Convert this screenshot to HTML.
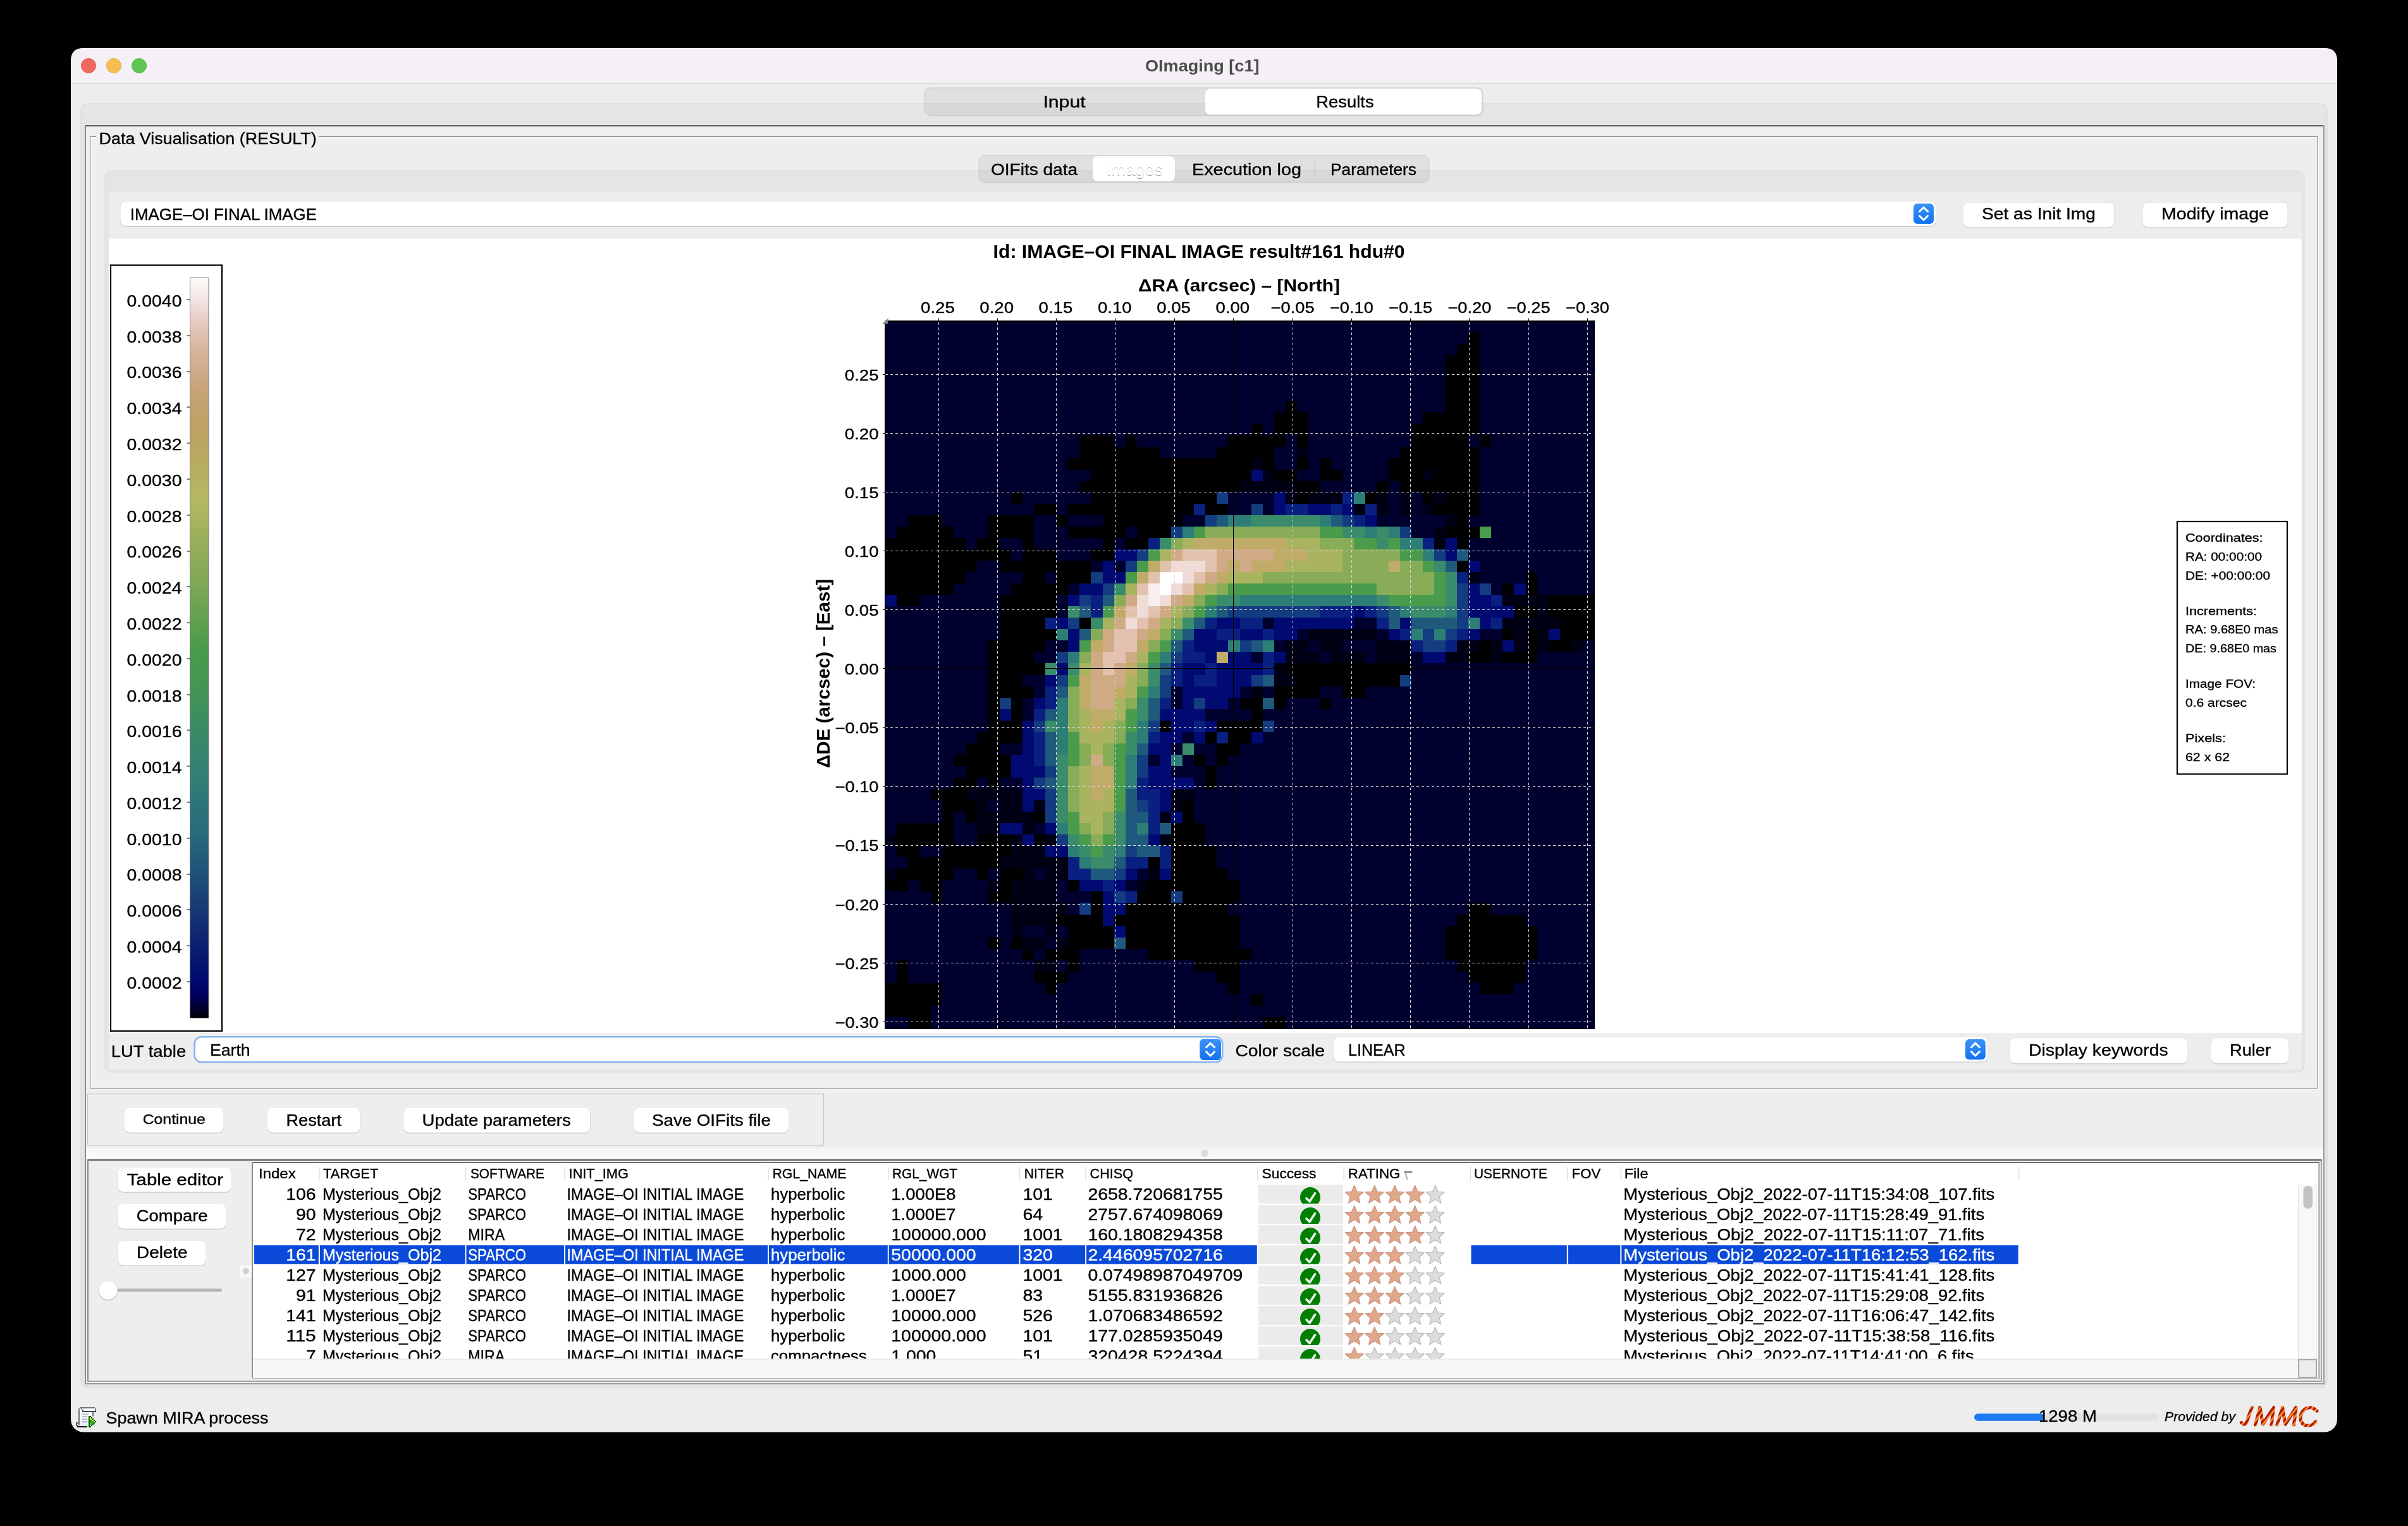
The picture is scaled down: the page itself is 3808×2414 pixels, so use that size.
<!DOCTYPE html>
<html><head><meta charset="utf-8"><title>OImaging</title>
<style>html,body{margin:0;padding:0;background:#000;overflow:hidden}svg{display:block;will-change:transform}text{font-family:"Liberation Sans",sans-serif;white-space:pre}</style>
</head><body>
<svg width="3808" height="2414" viewBox="0 0 3808 2414">
<defs><linearGradient id="bg" x1="0" y1="0" x2="0" y2="1"><stop offset="0" stop-color="#3b93f8"/><stop offset="1" stop-color="#1272ee"/></linearGradient><linearGradient id="cbar" x1="0" y1="1" x2="0" y2="0"><stop offset="0" stop-color="#000008"/><stop offset="0.03" stop-color="#00005c"/><stop offset="0.05" stop-color="#000a6e"/><stop offset="0.10" stop-color="#0c2070"/><stop offset="0.15" stop-color="#183a74"/><stop offset="0.20" stop-color="#1f5478"/><stop offset="0.25" stop-color="#286a7a"/><stop offset="0.30" stop-color="#2e7878"/><stop offset="0.35" stop-color="#368470"/><stop offset="0.40" stop-color="#3c8c62"/><stop offset="0.45" stop-color="#439652"/><stop offset="0.50" stop-color="#4a9a4a"/><stop offset="0.55" stop-color="#6aa252"/><stop offset="0.60" stop-color="#86aa58"/><stop offset="0.65" stop-color="#9cb05c"/><stop offset="0.70" stop-color="#b4b862"/><stop offset="0.75" stop-color="#b8ac62"/><stop offset="0.80" stop-color="#bea064"/><stop offset="0.85" stop-color="#c8a478"/><stop offset="0.90" stop-color="#d6b49c"/><stop offset="0.94" stop-color="#e6cac0"/><stop offset="0.97" stop-color="#f2e4e2"/><stop offset="1" stop-color="#fdfbfb"/></linearGradient><linearGradient id="jm" x1="0" y1="0" x2="1" y2="1"><stop offset="0" stop-color="#8a1000"/><stop offset="0.5" stop-color="#e85a10"/><stop offset="1" stop-color="#a01800"/></linearGradient></defs>
<rect x="0" y="0" width="3808" height="2414" fill="#000"/>
<rect x="112" y="76" width="3584" height="2189.5" fill="#ededed" rx="20"/>
<path d="M112 132 V96 Q112 76 132 76 H3676 Q3696 76 3696 96 V132 Z" fill="#f5f0f6"/>
<rect x="112" y="132" width="3584" height="1" fill="#d3d0d4"/>
<circle cx="140" cy="104" r="11.6" fill="#ee6a5f" stroke="#d9574c" stroke-width="0.8"/>
<circle cx="180" cy="104" r="11.6" fill="#f5bf4f" stroke="#dba73c" stroke-width="0.8"/>
<circle cx="220" cy="104" r="11.6" fill="#61c554" stroke="#4fae43" stroke-width="0.8"/>
<text x="1811.0" y="113.0" font-size="26" font-weight="700" fill="#4b4b4b" textLength="180.5" lengthAdjust="spacingAndGlyphs">OImaging [c1]</text>
<rect x="128" y="164" width="3552" height="2031" fill="#e5e5e5" rx="10" stroke="#d6d6d6" stroke-width="1"/>
<rect x="1462" y="139" width="883" height="43.5" fill="#000000" rx="9" stroke="#c4c4c4" stroke-width="1" fill-opacity="0.055" stroke-opacity="0.8"/>
<rect x="1906" y="141" width="437" height="42" fill="#c6c6c6" rx="8"/>
<rect x="1906" y="140.5" width="437" height="41.0" fill="#ffffff" rx="8"/>
<text x="1649.4" y="170.0" font-size="26" fill="#000" stroke="#000" stroke-width="0.35" textLength="67.2" lengthAdjust="spacingAndGlyphs">Input</text>
<text x="2081.3" y="170.0" font-size="26" fill="#000" stroke="#000" stroke-width="0.35" textLength="91.3" lengthAdjust="spacingAndGlyphs">Results</text>
<rect x="134" y="198" width="3542" height="1992" fill="#eeeeee"/>
<rect x="134" y="198" width="3542" height="2" fill="#5c5c5c"/>
<rect x="134" y="198" width="2" height="1992" fill="#8c8c8c"/>
<rect x="3674" y="198" width="2" height="1992" fill="#9a9a9a"/>
<rect x="134" y="2188" width="3542" height="2" fill="#9a9a9a"/>
<rect x="142" y="215" width="3523" height="2" fill="#9c9c9c"/>
<rect x="143.5" y="217" width="3521" height="1.5" fill="#ffffff"/>
<rect x="142" y="215" width="1.5" height="1507" fill="#9a9a9a"/>
<rect x="143.5" y="216.5" width="1" height="1505" fill="#ffffff"/>
<rect x="3664" y="215" width="1.5" height="1507" fill="#9a9a9a"/>
<rect x="3665.5" y="215" width="1" height="1509" fill="#ffffff"/>
<rect x="142" y="1721" width="3523" height="1.5" fill="#9a9a9a"/>
<rect x="142" y="1722.5" width="3524" height="1" fill="#ffffff"/>
<rect x="152" y="205" width="352" height="20" fill="#eeeeee"/>
<text x="156.6" y="227.6" font-size="26" fill="#000" stroke="#000" stroke-width="0.35" textLength="344.1" lengthAdjust="spacingAndGlyphs">Data Visualisation (RESULT)</text>
<rect x="166" y="270" width="3478" height="1426" fill="#e5e5e5" rx="10" stroke="#dadada" stroke-width="1"/>
<rect x="1548" y="245.6" width="712" height="42.8" fill="#000000" rx="9" stroke="#c4c4c4" stroke-width="1" fill-opacity="0.055" stroke-opacity="0.8"/>
<rect x="1728" y="247.5" width="130" height="40.5" fill="#c6c6c6" rx="8"/>
<rect x="1728" y="247" width="130" height="40" fill="#ffffff" rx="8"/>
<rect x="2078.5" y="258" width="1" height="20" fill="#c4c4c4"/>
<text x="1567.0" y="276.8" font-size="26" fill="#000" stroke="#000" stroke-width="0.35" textLength="137.0" lengthAdjust="spacingAndGlyphs">OIFits data</text>
<text x="1750.0" y="278.0" font-size="26" fill="#8e8e8e" textLength="89.0" lengthAdjust="spacingAndGlyphs">Images</text>
<text x="1750.0" y="276.6" font-size="26" fill="#ffffff" stroke="#ffffff" stroke-width="0.35" textLength="89.0" lengthAdjust="spacingAndGlyphs">Images</text>
<text x="1885.0" y="276.8" font-size="26" fill="#000" stroke="#000" stroke-width="0.35" textLength="173.0" lengthAdjust="spacingAndGlyphs">Execution log</text>
<text x="2104.0" y="276.8" font-size="26" fill="#000" stroke="#000" stroke-width="0.35" textLength="136.0" lengthAdjust="spacingAndGlyphs">Parameters</text>
<rect x="172" y="304" width="3468" height="1388" fill="#ededed"/>
<rect x="172" y="377.6" width="3467.5" height="1256.6" fill="#ffffff"/>
<rect x="190" y="318.5" width="2871.7" height="40.5" fill="#c8c8c8" rx="9"/>
<rect x="190" y="318" width="2871.7" height="40" fill="#dadada" rx="9"/>
<rect x="190.5" y="318.5" width="2870.7" height="39.0" fill="#ffffff" rx="8.5"/>
<rect x="3026" y="322" width="32" height="32" fill="url(#bg)" rx="6"/>
<path d="M3035.5 334.5 L3042.0 328.0 L3048.5 334.5 M3035.5 341.5 L3042.0 348.0 L3048.5 341.5" fill="none" stroke="#fff" stroke-width="3" stroke-linecap="round" stroke-linejoin="round"/>
<text x="205.8" y="348.4" font-size="26" fill="#000" stroke="#000" stroke-width="0.35" textLength="295.2" lengthAdjust="spacingAndGlyphs">IMAGE–OI FINAL IMAGE</text>
<rect x="3104" y="320.5" width="239.7" height="40.5" fill="#c9c9c9" rx="9"/>
<rect x="3104" y="320" width="239.7" height="40" fill="#d9d9d9" rx="9"/>
<rect x="3104.5" y="320.5" width="238.7" height="39.0" fill="#ffffff" rx="8.5"/>
<text x="3134.0" y="347.3" font-size="26" fill="#000" stroke="#000" stroke-width="0.35" textLength="180.0" lengthAdjust="spacingAndGlyphs">Set as Init Img</text>
<rect x="3388" y="320.5" width="230" height="40.5" fill="#c9c9c9" rx="9"/>
<rect x="3388" y="320" width="230" height="40" fill="#d9d9d9" rx="9"/>
<rect x="3388.5" y="320.5" width="229.0" height="39.0" fill="#ffffff" rx="8.5"/>
<text x="3418.0" y="347.3" font-size="26" fill="#000" stroke="#000" stroke-width="0.35" textLength="170.0" lengthAdjust="spacingAndGlyphs">Modify image</text>
<text x="1570.6" y="407.8" font-size="30" font-weight="700" fill="#000" textLength="651.0" lengthAdjust="spacingAndGlyphs">Id: IMAGE–OI FINAL IMAGE result#161 hdu#0</text>
<text x="1800.0" y="460.7" font-size="28" font-weight="700" fill="#000" textLength="319.0" lengthAdjust="spacingAndGlyphs">ΔRA (arcsec) – [North]</text>
<g transform="translate(1311.5 1213.9) rotate(-90)">
<text x="-1.0" y="0.0" font-size="30" font-weight="700" fill="#000" textLength="299.0" lengthAdjust="spacingAndGlyphs">ΔDE (arcsec) – [East]</text>
</g>
<svg x="1400" y="508" width="1121" height="1119" viewBox="0 0 62 62" preserveAspectRatio="none" shape-rendering="crispEdges"><rect width="62" height="62" fill="#00002e"/><path fill="#000000" d="M51 1h1v1h-1zM50 2h2v1h-2zM49 3h3v1h-3zM49 4h3v1h-3zM49 5h3v1h-3zM49 6h3v1h-3zM35 7h1v1h-1zM49 7h3v1h-3zM34 8h3v1h-3zM47 8h5v1h-5zM32 9h1v1h-1zM34 9h3v1h-3zM46 9h6v1h-6zM17 10h3v1h-3zM21 10h1v1h-1zM30 10h5v1h-5zM36 10h1v1h-1zM46 10h5v1h-5zM52 10h1v1h-1zM17 11h7v1h-7zM29 11h5v1h-5zM45 11h7v1h-7zM16 12h16v1h-16zM33 12h1v1h-1zM36 12h1v1h-1zM38 12h1v1h-1zM44 12h8v1h-8zM18 13h14v1h-14zM34 13h2v1h-2zM38 13h2v1h-2zM44 13h3v1h-3zM48 13h4v1h-4zM17 14h14v1h-14zM36 14h2v1h-2zM43 14h1v1h-1zM45 14h7v1h-7zM11 15h1v1h-1zM18 15h11v1h-11zM36 15h1v1h-1zM42 15h1v1h-1zM47 15h1v1h-1zM49 15h3v1h-3zM13 16h2v1h-2zM16 16h11v1h-11zM28 16h2v1h-2zM48 16h4v1h-4zM2 17h3v1h-3zM9 17h4v1h-4zM15 17h1v1h-1zM19 17h7v1h-7zM50 17h1v1h-1zM1 18h5v1h-5zM9 18h4v1h-4zM16 18h5v1h-5zM22 18h3v1h-3zM49 18h3v1h-3zM0 19h7v1h-7zM8 19h2v1h-2zM12 19h1v1h-1zM19 19h1v1h-1zM21 19h2v1h-2zM50 19h1v1h-1zM0 20h11v1h-11zM12 20h3v1h-3zM18 20h2v1h-2zM0 21h8v1h-8zM10 21h8v1h-8zM50 21h1v1h-1zM0 22h7v1h-7zM12 22h2v1h-2zM15 22h3v1h-3zM56 22h1v1h-1zM0 23h6v1h-6zM11 23h5v1h-5zM54 23h1v1h-1zM56 23h1v1h-1zM1 24h2v1h-2zM10 24h5v1h-5zM58 24h4v1h-4zM10 25h5v1h-5zM55 25h2v1h-2zM58 25h4v1h-4zM10 26h4v1h-4zM17 26h1v1h-1zM59 26h3v1h-3zM10 27h5v1h-5zM54 27h1v1h-1zM56 27h1v1h-1zM59 27h3v1h-3zM9 28h5v1h-5zM52 28h1v1h-1zM56 28h1v1h-1zM58 28h2v1h-2zM9 29h4v1h-4zM51 29h2v1h-2zM54 29h3v1h-3zM9 30h5v1h-5zM35 30h11v1h-11zM9 31h3v1h-3zM36 31h9v1h-9zM9 32h4v1h-4zM34 32h4v1h-4zM40 32h2v1h-2zM9 33h1v1h-1zM11 33h1v1h-1zM31 33h2v1h-2zM34 33h1v1h-1zM38 33h1v1h-1zM9 34h1v1h-1zM11 34h1v1h-1zM32 34h1v1h-1zM9 35h3v1h-3zM24 35h1v1h-1zM29 35h4v1h-4zM8 36h4v1h-4zM28 36h1v1h-1zM30 36h2v1h-2zM7 37h3v1h-3zM29 37h2v1h-2zM6 38h5v1h-5zM27 38h1v1h-1zM29 38h1v1h-1zM7 39h4v1h-4zM28 39h1v1h-1zM6 40h2v1h-2zM9 40h1v1h-1zM28 40h1v1h-1zM4 41h3v1h-3zM5 42h3v1h-3zM26 42h1v1h-1zM5 43h1v1h-1zM7 43h1v1h-1zM13 43h1v1h-1zM26 43h1v1h-1zM1 44h5v1h-5zM25 44h3v1h-3zM1 45h5v1h-5zM8 45h3v1h-3zM13 45h1v1h-1zM25 45h3v1h-3zM1 46h2v1h-2zM5 46h6v1h-6zM25 46h4v1h-4zM2 47h8v1h-8zM23 47h1v1h-1zM25 47h4v1h-4zM1 48h5v1h-5zM8 48h1v1h-1zM10 48h2v1h-2zM25 48h5v1h-5zM0 49h2v1h-2zM3 49h2v1h-2zM10 49h1v1h-1zM16 49h1v1h-1zM23 49h8v1h-8zM4 50h1v1h-1zM9 50h2v1h-2zM18 50h1v1h-1zM22 50h3v1h-3zM26 50h5v1h-5zM18 51h1v1h-1zM21 51h9v1h-9zM51 51h2v1h-2zM15 52h4v1h-4zM20 52h11v1h-11zM50 52h6v1h-6zM16 53h4v1h-4zM21 53h10v1h-10zM49 53h8v1h-8zM9 54h1v1h-1zM11 54h1v1h-1zM16 54h4v1h-4zM21 54h10v1h-10zM49 54h8v1h-8zM12 55h1v1h-1zM14 55h3v1h-3zM23 55h9v1h-9zM49 55h8v1h-8zM1 56h1v1h-1zM16 56h1v1h-1zM27 56h4v1h-4zM50 56h6v1h-6zM1 57h1v1h-1zM13 57h3v1h-3zM29 57h2v1h-2zM51 57h5v1h-5zM0 58h5v1h-5zM14 58h1v1h-1zM30 58h1v1h-1zM52 58h3v1h-3zM0 59h5v1h-5zM32 59h1v1h-1zM0 60h4v1h-4zM2 61h2v1h-2zM33 61h2v1h-2z"/><path fill="#000014" d="M36 11h1v1h-1zM32 12h1v1h-1zM33 13h1v1h-1zM47 13h1v1h-1zM31 14h5v1h-5zM35 15h1v1h-1zM37 15h3v1h-3zM43 15h1v1h-1zM45 15h1v1h-1zM48 15h1v1h-1zM41 16h1v1h-1zM43 16h1v1h-1zM45 16h1v1h-1zM47 16h1v1h-1zM49 17h1v1h-1zM48 18h1v1h-1zM48 19h1v1h-1zM51 22h1v1h-1zM54 24h4v1h-4zM57 25h1v1h-1zM54 26h5v1h-5zM37 27h6v1h-6zM55 27h1v1h-1zM57 27h1v1h-1zM35 28h2v1h-2zM38 28h2v1h-2zM43 28h3v1h-3zM50 28h2v1h-2zM53 28h1v1h-1zM55 28h1v1h-1zM57 28h1v1h-1zM60 28h1v1h-1zM35 29h3v1h-3zM39 29h3v1h-3zM43 29h3v1h-3zM49 29h2v1h-2zM53 29h1v1h-1zM34 30h1v1h-1zM34 31h2v1h-2zM32 32h1v1h-1zM7 41h5v1h-5zM25 41h2v1h-2zM8 42h1v1h-1zM10 42h2v1h-2zM13 42h1v1h-1zM25 42h1v1h-1zM8 43h5v1h-5zM24 43h1v1h-1zM8 44h2v1h-2zM12 44h1v1h-1zM0 45h1v1h-1zM11 45h1v1h-1zM14 45h1v1h-1zM24 45h1v1h-1zM11 46h3v1h-3zM10 47h6v1h-6zM0 48h1v1h-1zM12 48h1v1h-1zM14 48h2v1h-2zM23 48h1v1h-1zM9 49h1v1h-1zM11 49h4v1h-4zM22 49h1v1h-1zM11 50h4v1h-4zM11 51h5v1h-5zM11 52h4v1h-4zM11 53h1v1h-1zM14 53h1v1h-1zM12 54h2v1h-2zM15 54h1v1h-1zM13 56h2v1h-2z"/><path fill="#000a72" d="M32 13h1v1h-1zM34 15h1v1h-1zM34 16h1v1h-1zM37 16h2v1h-2zM40 16h1v1h-1zM42 17h1v1h-1zM49 19h1v1h-1zM20 20h2v1h-2zM49 20h1v1h-1zM19 21h1v1h-1zM51 21h1v1h-1zM19 22h2v1h-2zM17 23h2v1h-2zM51 23h1v1h-1zM55 23h1v1h-1zM0 24h1v1h-1zM16 24h1v1h-1zM51 24h2v1h-2zM41 25h1v1h-1zM51 25h4v1h-4zM15 26h1v1h-1zM29 26h2v1h-2zM34 26h7v1h-7zM45 26h1v1h-1zM52 26h1v1h-1zM16 27h1v1h-1zM27 27h2v1h-2zM31 27h2v1h-2zM34 27h2v1h-2zM44 27h1v1h-1zM51 27h1v1h-1zM58 27h1v1h-1zM16 28h1v1h-1zM27 28h3v1h-3zM54 28h1v1h-1zM28 29h1v1h-1zM30 29h2v1h-2zM34 29h1v1h-1zM47 29h2v1h-2zM15 30h1v1h-1zM26 30h2v1h-2zM29 30h4v1h-4zM14 31h1v1h-1zM26 31h1v1h-1zM29 31h3v1h-3zM26 32h5v1h-5zM13 33h1v1h-1zM26 33h1v1h-1zM28 33h2v1h-2zM10 34h1v1h-1zM24 34h4v1h-4zM12 35h1v1h-1zM25 35h2v1h-2zM28 35h1v1h-1zM12 36h1v1h-1zM24 36h2v1h-2zM27 36h1v1h-1zM32 36h1v1h-1zM12 37h1v1h-1zM23 37h2v1h-2zM11 38h2v1h-2zM24 38h1v1h-1zM11 39h3v1h-3zM23 39h2v1h-2zM12 40h1v1h-1zM23 40h4v1h-4zM12 41h2v1h-2zM24 41h1v1h-1zM12 42h1v1h-1zM24 42h1v1h-1zM25 43h1v1h-1zM10 44h2v1h-2zM14 44h1v1h-1zM12 45h1v1h-1zM23 45h1v1h-1zM14 46h2v1h-2zM21 48h1v1h-1zM24 48h1v1h-1zM17 49h2v1h-2zM20 49h1v1h-1zM19 50h1v1h-1zM19 51h2v1h-2zM19 52h1v1h-1zM20 53h1v1h-1z"/><path fill="#143c80" d="M29 15h1v1h-1zM32 16h1v1h-1zM28 17h1v1h-1zM40 17h1v1h-1zM25 18h1v1h-1zM45 18h1v1h-1zM22 20h1v1h-1zM48 20h1v1h-1zM21 21h1v1h-1zM18 22h1v1h-1zM19 23h1v1h-1zM50 23h1v1h-1zM52 23h1v1h-1zM17 24h1v1h-1zM50 24h1v1h-1zM30 25h8v1h-8zM43 25h1v1h-1zM50 25h1v1h-1zM16 26h1v1h-1zM50 26h1v1h-1zM47 27h1v1h-1zM49 27h1v1h-1zM31 28h1v1h-1zM47 28h2v1h-2zM15 29h1v1h-1zM25 29h1v1h-1zM15 31h1v1h-1zM24 31h1v1h-1zM32 31h1v1h-1zM45 31h1v1h-1zM24 32h1v1h-1zM10 33h1v1h-1zM27 33h1v1h-1zM13 35h1v1h-1zM23 35h1v1h-1zM33 35h1v1h-1zM22 38h1v1h-1zM14 39h1v1h-1zM22 39h1v1h-1zM13 40h1v1h-1zM14 41h1v1h-1zM14 42h1v1h-1zM22 42h1v1h-1zM14 43h1v1h-1zM15 45h1v1h-1zM21 46h1v1h-1zM20 48h1v1h-1zM20 50h1v1h-1zM25 50h1v1h-1zM17 51h1v1h-1z"/><path fill="#0a2080" d="M40 15h1v1h-1zM27 16h1v1h-1zM35 16h2v1h-2zM39 16h1v1h-1zM42 16h1v1h-1zM41 17h1v1h-1zM23 19h1v1h-1zM47 19h1v1h-1zM50 22h1v1h-1zM18 24h1v1h-1zM53 24h1v1h-1zM18 25h1v1h-1zM38 25h3v1h-3zM42 25h1v1h-1zM14 26h1v1h-1zM28 26h1v1h-1zM31 26h2v1h-2zM43 26h1v1h-1zM53 26h1v1h-1zM29 27h2v1h-2zM33 27h1v1h-1zM45 27h1v1h-1zM50 27h1v1h-1zM26 28h1v1h-1zM46 28h1v1h-1zM49 28h1v1h-1zM26 29h2v1h-2zM33 29h1v1h-1zM25 30h1v1h-1zM28 30h1v1h-1zM33 30h1v1h-1zM25 31h1v1h-1zM27 31h2v1h-2zM14 32h1v1h-1zM14 33h1v1h-1zM24 33h1v1h-1zM13 34h1v1h-1zM27 35h1v1h-1zM13 36h1v1h-1zM23 36h1v1h-1zM29 36h1v1h-1zM13 37h1v1h-1zM13 38h1v1h-1zM22 40h1v1h-1zM22 41h2v1h-2zM23 42h1v1h-1zM23 43h1v1h-1zM23 44h1v1h-1zM24 46h1v1h-1zM16 47h1v1h-1zM21 47h2v1h-2zM24 47h1v1h-1zM16 48h2v1h-2zM19 49h1v1h-1zM21 50h1v1h-1z"/><path fill="#2e7e78" d="M41 15h1v1h-1zM30 17h2v1h-2zM38 17h1v1h-1zM26 18h1v1h-1zM42 18h1v1h-1zM44 18h1v1h-1zM45 19h2v1h-2zM47 20h1v1h-1zM31 24h12v1h-12zM28 25h1v1h-1zM45 25h1v1h-1zM49 25h1v1h-1zM51 26h1v1h-1zM15 27h1v1h-1zM46 27h1v1h-1zM48 27h1v1h-1zM30 28h1v1h-1zM33 28h1v1h-1zM16 29h1v1h-1zM24 29h1v1h-1zM23 32h1v1h-1zM15 33h1v1h-1zM15 34h1v1h-1zM15 35h1v1h-1zM22 35h1v1h-1zM15 36h1v1h-1zM22 36h1v1h-1zM15 37h1v1h-1zM21 38h1v1h-1zM25 38h1v1h-1zM21 39h1v1h-1zM21 40h1v1h-1zM15 44h1v1h-1zM22 44h1v1h-1zM16 46h1v1h-1zM20 46h1v1h-1zM17 47h1v1h-1z"/><path fill="#1f5a7c" d="M29 17h1v1h-1zM39 17h1v1h-1zM50 20h1v1h-1zM49 21h1v1h-1zM19 24h1v1h-1zM17 25h1v1h-1zM29 25h1v1h-1zM44 25h1v1h-1zM27 26h1v1h-1zM44 26h1v1h-1zM46 26h4v1h-4zM17 27h1v1h-1zM26 27h1v1h-1zM25 28h1v1h-1zM32 28h1v1h-1zM24 30h1v1h-1zM33 31h1v1h-1zM15 32h1v1h-1zM23 33h1v1h-1zM33 33h1v1h-1zM14 34h1v1h-1zM23 34h1v1h-1zM14 36h1v1h-1zM14 37h1v1h-1zM22 37h1v1h-1zM14 38h1v1h-1zM14 40h1v1h-1zM21 41h1v1h-1zM21 42h1v1h-1zM21 43h2v1h-2zM21 44h1v1h-1zM24 44h1v1h-1zM21 45h2v1h-2zM22 46h2v1h-2zM20 47h1v1h-1zM18 48h2v1h-2zM20 54h1v1h-1z"/><path fill="#3a8c6a" d="M32 17h6v1h-6zM40 18h2v1h-2zM43 18h1v1h-1zM24 19h1v1h-1zM43 19h1v1h-1zM48 21h1v1h-1zM49 22h1v1h-1zM20 23h1v1h-1zM49 23h1v1h-1zM29 24h2v1h-2zM43 24h1v1h-1zM49 24h1v1h-1zM16 25h1v1h-1zM46 25h3v1h-3zM18 26h1v1h-1zM26 26h1v1h-1zM25 27h1v1h-1zM14 30h1v1h-1zM16 30h1v1h-1zM23 30h1v1h-1zM23 31h1v1h-1zM22 33h1v1h-1zM22 34h1v1h-1zM14 35h1v1h-1zM21 36h1v1h-1zM21 37h1v1h-1zM26 37h1v1h-1zM15 38h1v1h-1zM15 39h1v1h-1zM15 40h1v1h-1zM15 41h1v1h-1zM15 42h1v1h-1zM15 43h1v1h-1zM20 43h1v1h-1zM20 44h1v1h-1zM16 45h1v1h-1zM20 45h1v1h-1zM17 46h1v1h-1zM19 46h1v1h-1zM18 47h2v1h-2z"/><path fill="#4a9c4c" d="M27 18h1v1h-1zM38 18h2v1h-2zM52 18h1v1h-1zM41 19h2v1h-2zM44 19h1v1h-1zM23 20h1v1h-1zM45 20h2v1h-2zM22 21h1v1h-1zM47 21h1v1h-1zM21 22h1v1h-1zM48 22h1v1h-1zM30 23h13v1h-13zM48 23h1v1h-1zM28 24h1v1h-1zM44 24h5v1h-5zM19 25h1v1h-1zM27 25h1v1h-1zM17 28h1v1h-1zM24 28h1v1h-1zM23 29h1v1h-1zM16 31h1v1h-1zM22 32h1v1h-1zM21 34h1v1h-1zM21 35h1v1h-1zM16 36h1v1h-1zM16 37h1v1h-1zM20 37h1v1h-1zM16 38h1v1h-1zM20 38h1v1h-1zM20 39h1v1h-1zM20 40h1v1h-1zM20 41h1v1h-1zM20 42h1v1h-1zM16 43h1v1h-1zM16 44h1v1h-1zM17 45h1v1h-1zM19 45h1v1h-1zM18 46h1v1h-1z"/><path fill="#88ac58" d="M28 18h10v1h-10zM25 19h1v1h-1zM38 19h3v1h-3zM40 20h5v1h-5zM40 21h4v1h-4zM45 21h2v1h-2zM33 22h15v1h-15zM29 23h1v1h-1zM43 23h5v1h-5zM20 24h1v1h-1zM27 24h1v1h-1zM26 25h1v1h-1zM25 26h1v1h-1zM18 27h1v1h-1zM24 27h1v1h-1zM23 28h1v1h-1zM17 29h1v1h-1zM22 30h1v1h-1zM22 31h1v1h-1zM16 32h1v1h-1zM16 33h1v1h-1zM21 33h1v1h-1zM16 34h1v1h-1zM16 35h1v1h-1zM20 35h1v1h-1zM20 36h1v1h-1zM17 37h1v1h-1zM19 37h1v1h-1zM17 38h1v1h-1zM19 38h1v1h-1zM16 39h1v1h-1zM16 40h1v1h-1zM16 41h1v1h-1zM16 42h1v1h-1zM19 43h1v1h-1zM17 44h1v1h-1zM19 44h1v1h-1zM18 45h1v1h-1z"/><path fill="#aab460" d="M26 19h1v1h-1zM35 19h3v1h-3zM24 20h1v1h-1zM37 20h3v1h-3zM35 21h5v1h-5zM30 22h3v1h-3zM21 23h1v1h-1zM28 23h1v1h-1zM25 25h1v1h-1zM19 26h1v1h-1zM24 26h1v1h-1zM22 29h1v1h-1zM17 30h1v1h-1zM21 31h1v1h-1zM21 32h1v1h-1zM20 33h1v1h-1zM17 34h1v1h-1zM20 34h1v1h-1zM17 35h1v1h-1zM19 35h1v1h-1zM17 36h3v1h-3zM18 37h1v1h-1zM17 39h1v1h-1zM17 40h1v1h-1zM17 41h1v1h-1zM19 41h1v1h-1zM17 42h3v1h-3zM17 43h2v1h-2zM18 44h1v1h-1z"/><path fill="#c0ac68" d="M27 19h8v1h-8zM34 20h3v1h-3zM23 21h1v1h-1zM30 21h1v1h-1zM32 21h3v1h-3zM44 21h1v1h-1zM22 22h1v1h-1zM29 22h1v1h-1zM27 23h1v1h-1zM26 24h1v1h-1zM20 25h1v1h-1zM23 27h1v1h-1zM18 28h1v1h-1zM22 28h1v1h-1zM29 29h1v1h-1zM21 30h1v1h-1zM17 31h1v1h-1zM17 32h1v1h-1zM20 32h1v1h-1zM17 33h1v1h-1zM18 34h2v1h-2zM18 35h1v1h-1zM18 39h2v1h-2zM18 40h2v1h-2zM18 41h1v1h-1z"/><path fill="#d0aa84" d="M25 20h1v1h-1zM29 20h5v1h-5zM29 21h1v1h-1zM31 21h1v1h-1zM28 22h1v1h-1zM21 24h1v1h-1zM25 24h1v1h-1zM24 25h1v1h-1zM20 26h1v1h-1zM23 26h1v1h-1zM19 27h1v1h-1zM22 27h1v1h-1zM19 28h1v1h-1zM18 29h1v1h-1zM21 29h1v1h-1zM18 30h1v1h-1zM20 30h1v1h-1zM18 31h3v1h-3zM18 32h2v1h-2zM18 33h2v1h-2zM18 38h1v1h-1z"/><path fill="#e2c2ae" d="M26 20h3v1h-3zM24 21h1v1h-1zM28 21h1v1h-1zM23 22h1v1h-1zM27 22h1v1h-1zM22 23h1v1h-1zM26 23h1v1h-1zM21 25h1v1h-1zM23 25h1v1h-1zM22 26h1v1h-1zM20 27h2v1h-2zM20 28h2v1h-2zM19 29h2v1h-2zM19 30h1v1h-1z"/><path fill="#f0dcd6" d="M25 21h3v1h-3zM26 22h1v1h-1zM25 23h1v1h-1zM22 24h1v1h-1zM24 24h1v1h-1zM22 25h1v1h-1zM21 26h1v1h-1z"/><path fill="#ffffff" d="M24 22h2v1h-2zM24 23h1v1h-1z"/><path fill="#f8efee" d="M23 23h1v1h-1zM23 24h1v1h-1z"/></svg>
<line x1="1484.5" y1="510" x2="1484.5" y2="1627" stroke="#d8d8d8" stroke-width="1" stroke-dasharray="4 4"/>
<line x1="1484.5" y1="503.5" x2="1484.5" y2="508" stroke="#000" stroke-width="1"/>
<line x1="1577.5" y1="510" x2="1577.5" y2="1627" stroke="#d8d8d8" stroke-width="1" stroke-dasharray="4 4"/>
<line x1="1577.5" y1="503.5" x2="1577.5" y2="508" stroke="#000" stroke-width="1"/>
<line x1="1670.5" y1="510" x2="1670.5" y2="1627" stroke="#d8d8d8" stroke-width="1" stroke-dasharray="4 4"/>
<line x1="1670.5" y1="503.5" x2="1670.5" y2="508" stroke="#000" stroke-width="1"/>
<line x1="1764.5" y1="510" x2="1764.5" y2="1627" stroke="#d8d8d8" stroke-width="1" stroke-dasharray="4 4"/>
<line x1="1764.5" y1="503.5" x2="1764.5" y2="508" stroke="#000" stroke-width="1"/>
<line x1="1857.5" y1="510" x2="1857.5" y2="1627" stroke="#d8d8d8" stroke-width="1" stroke-dasharray="4 4"/>
<line x1="1857.5" y1="503.5" x2="1857.5" y2="508" stroke="#000" stroke-width="1"/>
<line x1="1950.5" y1="510" x2="1950.5" y2="1627" stroke="#d8d8d8" stroke-width="1" stroke-dasharray="4 4"/>
<line x1="1950.5" y1="503.5" x2="1950.5" y2="508" stroke="#000" stroke-width="1"/>
<line x1="2044.5" y1="510" x2="2044.5" y2="1627" stroke="#d8d8d8" stroke-width="1" stroke-dasharray="4 4"/>
<line x1="2044.5" y1="503.5" x2="2044.5" y2="508" stroke="#000" stroke-width="1"/>
<line x1="2137.5" y1="510" x2="2137.5" y2="1627" stroke="#d8d8d8" stroke-width="1" stroke-dasharray="4 4"/>
<line x1="2137.5" y1="503.5" x2="2137.5" y2="508" stroke="#000" stroke-width="1"/>
<line x1="2230.5" y1="510" x2="2230.5" y2="1627" stroke="#d8d8d8" stroke-width="1" stroke-dasharray="4 4"/>
<line x1="2230.5" y1="503.5" x2="2230.5" y2="508" stroke="#000" stroke-width="1"/>
<line x1="2323.5" y1="510" x2="2323.5" y2="1627" stroke="#d8d8d8" stroke-width="1" stroke-dasharray="4 4"/>
<line x1="2323.5" y1="503.5" x2="2323.5" y2="508" stroke="#000" stroke-width="1"/>
<line x1="2417.5" y1="510" x2="2417.5" y2="1627" stroke="#d8d8d8" stroke-width="1" stroke-dasharray="4 4"/>
<line x1="2417.5" y1="503.5" x2="2417.5" y2="508" stroke="#000" stroke-width="1"/>
<line x1="2510.5" y1="510" x2="2510.5" y2="1627" stroke="#d8d8d8" stroke-width="1" stroke-dasharray="4 4"/>
<line x1="2510.5" y1="503.5" x2="2510.5" y2="508" stroke="#000" stroke-width="1"/>
<line x1="1400" y1="592.5" x2="2521" y2="592.5" stroke="#d8d8d8" stroke-width="1" stroke-dasharray="4 4"/>
<line x1="1396" y1="592.5" x2="1400" y2="592.5" stroke="#000" stroke-width="1"/>
<line x1="1400" y1="685.5" x2="2521" y2="685.5" stroke="#d8d8d8" stroke-width="1" stroke-dasharray="4 4"/>
<line x1="1396" y1="685.5" x2="1400" y2="685.5" stroke="#000" stroke-width="1"/>
<line x1="1400" y1="778.5" x2="2521" y2="778.5" stroke="#d8d8d8" stroke-width="1" stroke-dasharray="4 4"/>
<line x1="1396" y1="778.5" x2="1400" y2="778.5" stroke="#000" stroke-width="1"/>
<line x1="1400" y1="871.5" x2="2521" y2="871.5" stroke="#d8d8d8" stroke-width="1" stroke-dasharray="4 4"/>
<line x1="1396" y1="871.5" x2="1400" y2="871.5" stroke="#000" stroke-width="1"/>
<line x1="1400" y1="964.5" x2="2521" y2="964.5" stroke="#d8d8d8" stroke-width="1" stroke-dasharray="4 4"/>
<line x1="1396" y1="964.5" x2="1400" y2="964.5" stroke="#000" stroke-width="1"/>
<line x1="1400" y1="1057.5" x2="2521" y2="1057.5" stroke="#d8d8d8" stroke-width="1" stroke-dasharray="4 4"/>
<line x1="1396" y1="1057.5" x2="1400" y2="1057.5" stroke="#000" stroke-width="1"/>
<line x1="1400" y1="1150.5" x2="2521" y2="1150.5" stroke="#d8d8d8" stroke-width="1" stroke-dasharray="4 4"/>
<line x1="1396" y1="1150.5" x2="1400" y2="1150.5" stroke="#000" stroke-width="1"/>
<line x1="1400" y1="1244.5" x2="2521" y2="1244.5" stroke="#d8d8d8" stroke-width="1" stroke-dasharray="4 4"/>
<line x1="1396" y1="1244.5" x2="1400" y2="1244.5" stroke="#000" stroke-width="1"/>
<line x1="1400" y1="1337.5" x2="2521" y2="1337.5" stroke="#d8d8d8" stroke-width="1" stroke-dasharray="4 4"/>
<line x1="1396" y1="1337.5" x2="1400" y2="1337.5" stroke="#000" stroke-width="1"/>
<line x1="1400" y1="1430.5" x2="2521" y2="1430.5" stroke="#d8d8d8" stroke-width="1" stroke-dasharray="4 4"/>
<line x1="1396" y1="1430.5" x2="1400" y2="1430.5" stroke="#000" stroke-width="1"/>
<line x1="1400" y1="1523.5" x2="2521" y2="1523.5" stroke="#d8d8d8" stroke-width="1" stroke-dasharray="4 4"/>
<line x1="1396" y1="1523.5" x2="1400" y2="1523.5" stroke="#000" stroke-width="1"/>
<line x1="1400" y1="1616.5" x2="2521" y2="1616.5" stroke="#d8d8d8" stroke-width="1" stroke-dasharray="4 4"/>
<line x1="1396" y1="1616.5" x2="1400" y2="1616.5" stroke="#000" stroke-width="1"/>
<rect x="1950" y="508" width="1" height="1119" fill="#000000"/>
<rect x="1400" y="1057" width="1121" height="1" fill="#000000"/>
<rect x="1399" y="507" width="1123" height="2.5" fill="#000"/>
<rect x="1399" y="1626" width="1123" height="2" fill="#000"/>
<rect x="1399" y="507" width="1.5" height="1121" fill="#000"/>
<rect x="2520.5" y="507" width="1.5" height="1121" fill="#000"/>
<path d="M1395 512.8 L1404.6 503 L1404.6 508 L1400 512.8 Z" fill="#8a8a8a"/>
<circle cx="1403" cy="511" r="1.6" fill="#8a8a8a"/>
<text x="1456.1" y="494.6" font-size="24" fill="#000" stroke="#000" stroke-width="0.35" textLength="53.7" lengthAdjust="spacingAndGlyphs">0.25</text>
<text x="1549.3" y="494.6" font-size="24" fill="#000" stroke="#000" stroke-width="0.35" textLength="53.7" lengthAdjust="spacingAndGlyphs">0.20</text>
<text x="1642.6" y="494.6" font-size="24" fill="#000" stroke="#000" stroke-width="0.35" textLength="53.7" lengthAdjust="spacingAndGlyphs">0.15</text>
<text x="1735.9" y="494.6" font-size="24" fill="#000" stroke="#000" stroke-width="0.35" textLength="53.7" lengthAdjust="spacingAndGlyphs">0.10</text>
<text x="1829.2" y="494.6" font-size="24" fill="#000" stroke="#000" stroke-width="0.35" textLength="53.7" lengthAdjust="spacingAndGlyphs">0.05</text>
<text x="1922.5" y="494.6" font-size="24" fill="#000" stroke="#000" stroke-width="0.35" textLength="53.7" lengthAdjust="spacingAndGlyphs">0.00</text>
<text x="2009.6" y="494.6" font-size="24" fill="#000" stroke="#000" stroke-width="0.35" textLength="69.0" lengthAdjust="spacingAndGlyphs">−0.05</text>
<text x="2102.9" y="494.6" font-size="24" fill="#000" stroke="#000" stroke-width="0.35" textLength="69.0" lengthAdjust="spacingAndGlyphs">−0.10</text>
<text x="2196.1" y="494.6" font-size="24" fill="#000" stroke="#000" stroke-width="0.35" textLength="69.0" lengthAdjust="spacingAndGlyphs">−0.15</text>
<text x="2289.4" y="494.6" font-size="24" fill="#000" stroke="#000" stroke-width="0.35" textLength="69.0" lengthAdjust="spacingAndGlyphs">−0.20</text>
<text x="2382.7" y="494.6" font-size="24" fill="#000" stroke="#000" stroke-width="0.35" textLength="69.0" lengthAdjust="spacingAndGlyphs">−0.25</text>
<text x="2476.0" y="494.6" font-size="24" fill="#000" stroke="#000" stroke-width="0.35" textLength="69.0" lengthAdjust="spacingAndGlyphs">−0.30</text>
<text x="1335.8" y="601.9" font-size="24" fill="#000" stroke="#000" stroke-width="0.35" textLength="53.7" lengthAdjust="spacingAndGlyphs">0.25</text>
<text x="1335.8" y="694.9" font-size="24" fill="#000" stroke="#000" stroke-width="0.35" textLength="53.7" lengthAdjust="spacingAndGlyphs">0.20</text>
<text x="1335.8" y="788.0" font-size="24" fill="#000" stroke="#000" stroke-width="0.35" textLength="53.7" lengthAdjust="spacingAndGlyphs">0.15</text>
<text x="1335.8" y="881.1" font-size="24" fill="#000" stroke="#000" stroke-width="0.35" textLength="53.7" lengthAdjust="spacingAndGlyphs">0.10</text>
<text x="1335.8" y="974.1" font-size="24" fill="#000" stroke="#000" stroke-width="0.35" textLength="53.7" lengthAdjust="spacingAndGlyphs">0.05</text>
<text x="1335.8" y="1067.2" font-size="24" fill="#000" stroke="#000" stroke-width="0.35" textLength="53.7" lengthAdjust="spacingAndGlyphs">0.00</text>
<text x="1320.5" y="1160.3" font-size="24" fill="#000" stroke="#000" stroke-width="0.35" textLength="69.0" lengthAdjust="spacingAndGlyphs">−0.05</text>
<text x="1320.5" y="1253.3" font-size="24" fill="#000" stroke="#000" stroke-width="0.35" textLength="69.0" lengthAdjust="spacingAndGlyphs">−0.10</text>
<text x="1320.5" y="1346.4" font-size="24" fill="#000" stroke="#000" stroke-width="0.35" textLength="69.0" lengthAdjust="spacingAndGlyphs">−0.15</text>
<text x="1320.5" y="1439.5" font-size="24" fill="#000" stroke="#000" stroke-width="0.35" textLength="69.0" lengthAdjust="spacingAndGlyphs">−0.20</text>
<text x="1320.5" y="1532.5" font-size="24" fill="#000" stroke="#000" stroke-width="0.35" textLength="69.0" lengthAdjust="spacingAndGlyphs">−0.25</text>
<text x="1320.5" y="1625.6" font-size="24" fill="#000" stroke="#000" stroke-width="0.35" textLength="69.0" lengthAdjust="spacingAndGlyphs">−0.30</text>
<rect x="175.5" y="419" width="175" height="1214.01" fill="none"/>
<rect x="175" y="419.5" width="176" height="1211.5" fill="none" stroke="#000" stroke-width="2.2"/>
<rect x="300.5" y="439.5" width="29.5" height="1171.0" fill="url(#cbar)" stroke="#7a7a7a" stroke-width="1"/>
<rect x="295.5" y="473.5" width="5" height="1" fill="#000"/>
<text x="200.5" y="484.8" font-size="25" fill="#000" stroke="#000" stroke-width="0.35" textLength="87.0" lengthAdjust="spacingAndGlyphs">0.0040</text>
<rect x="295.5" y="530.5" width="5" height="1" fill="#000"/>
<text x="200.5" y="541.6" font-size="25" fill="#000" stroke="#000" stroke-width="0.35" textLength="87.0" lengthAdjust="spacingAndGlyphs">0.0038</text>
<rect x="295.5" y="587.5" width="5" height="1" fill="#000"/>
<text x="200.5" y="598.4" font-size="25" fill="#000" stroke="#000" stroke-width="0.35" textLength="87.0" lengthAdjust="spacingAndGlyphs">0.0036</text>
<rect x="295.5" y="643.5" width="5" height="1" fill="#000"/>
<text x="200.5" y="655.2" font-size="25" fill="#000" stroke="#000" stroke-width="0.35" textLength="87.0" lengthAdjust="spacingAndGlyphs">0.0034</text>
<rect x="295.5" y="700.5" width="5" height="1" fill="#000"/>
<text x="200.5" y="712.0" font-size="25" fill="#000" stroke="#000" stroke-width="0.35" textLength="87.0" lengthAdjust="spacingAndGlyphs">0.0032</text>
<rect x="295.5" y="757.5" width="5" height="1" fill="#000"/>
<text x="200.5" y="768.8" font-size="25" fill="#000" stroke="#000" stroke-width="0.35" textLength="87.0" lengthAdjust="spacingAndGlyphs">0.0030</text>
<rect x="295.5" y="814.5" width="5" height="1" fill="#000"/>
<text x="200.5" y="825.5" font-size="25" fill="#000" stroke="#000" stroke-width="0.35" textLength="87.0" lengthAdjust="spacingAndGlyphs">0.0028</text>
<rect x="295.5" y="871.5" width="5" height="1" fill="#000"/>
<text x="200.5" y="882.3" font-size="25" fill="#000" stroke="#000" stroke-width="0.35" textLength="87.0" lengthAdjust="spacingAndGlyphs">0.0026</text>
<rect x="295.5" y="927.5" width="5" height="1" fill="#000"/>
<text x="200.5" y="939.1" font-size="25" fill="#000" stroke="#000" stroke-width="0.35" textLength="87.0" lengthAdjust="spacingAndGlyphs">0.0024</text>
<rect x="295.5" y="984.5" width="5" height="1" fill="#000"/>
<text x="200.5" y="995.9" font-size="25" fill="#000" stroke="#000" stroke-width="0.35" textLength="87.0" lengthAdjust="spacingAndGlyphs">0.0022</text>
<rect x="295.5" y="1041.5" width="5" height="1" fill="#000"/>
<text x="200.5" y="1052.7" font-size="25" fill="#000" stroke="#000" stroke-width="0.35" textLength="87.0" lengthAdjust="spacingAndGlyphs">0.0020</text>
<rect x="295.5" y="1098.5" width="5" height="1" fill="#000"/>
<text x="200.5" y="1109.5" font-size="25" fill="#000" stroke="#000" stroke-width="0.35" textLength="87.0" lengthAdjust="spacingAndGlyphs">0.0018</text>
<rect x="295.5" y="1154.5" width="5" height="1" fill="#000"/>
<text x="200.5" y="1166.3" font-size="25" fill="#000" stroke="#000" stroke-width="0.35" textLength="87.0" lengthAdjust="spacingAndGlyphs">0.0016</text>
<rect x="295.5" y="1211.5" width="5" height="1" fill="#000"/>
<text x="200.5" y="1223.1" font-size="25" fill="#000" stroke="#000" stroke-width="0.35" textLength="87.0" lengthAdjust="spacingAndGlyphs">0.0014</text>
<rect x="295.5" y="1268.5" width="5" height="1" fill="#000"/>
<text x="200.5" y="1279.9" font-size="25" fill="#000" stroke="#000" stroke-width="0.35" textLength="87.0" lengthAdjust="spacingAndGlyphs">0.0012</text>
<rect x="295.5" y="1325.5" width="5" height="1" fill="#000"/>
<text x="200.5" y="1336.6" font-size="25" fill="#000" stroke="#000" stroke-width="0.35" textLength="87.0" lengthAdjust="spacingAndGlyphs">0.0010</text>
<rect x="295.5" y="1382.5" width="5" height="1" fill="#000"/>
<text x="200.5" y="1393.4" font-size="25" fill="#000" stroke="#000" stroke-width="0.35" textLength="87.0" lengthAdjust="spacingAndGlyphs">0.0008</text>
<rect x="295.5" y="1438.5" width="5" height="1" fill="#000"/>
<text x="200.5" y="1450.2" font-size="25" fill="#000" stroke="#000" stroke-width="0.35" textLength="87.0" lengthAdjust="spacingAndGlyphs">0.0006</text>
<rect x="295.5" y="1495.5" width="5" height="1" fill="#000"/>
<text x="200.5" y="1507.0" font-size="25" fill="#000" stroke="#000" stroke-width="0.35" textLength="87.0" lengthAdjust="spacingAndGlyphs">0.0004</text>
<rect x="295.5" y="1552.5" width="5" height="1" fill="#000"/>
<text x="200.5" y="1563.8" font-size="25" fill="#000" stroke="#000" stroke-width="0.35" textLength="87.0" lengthAdjust="spacingAndGlyphs">0.0002</text>
<rect x="3443" y="825" width="174" height="399.5" fill="none" stroke="#000" stroke-width="2.2"/>
<text x="3456.0" y="856.5" font-size="19" fill="#000" stroke="#000" stroke-width="0.35" textLength="122.6" lengthAdjust="spacingAndGlyphs">Coordinates:</text>
<text x="3456.0" y="886.6" font-size="19" fill="#000" stroke="#000" stroke-width="0.35" textLength="121.0" lengthAdjust="spacingAndGlyphs">RA: 00:00:00</text>
<text x="3456.0" y="916.5" font-size="19" fill="#000" stroke="#000" stroke-width="0.35" textLength="134.0" lengthAdjust="spacingAndGlyphs">DE: +00:00:00</text>
<text x="3456.0" y="972.8" font-size="19" fill="#000" stroke="#000" stroke-width="0.35" textLength="113.0" lengthAdjust="spacingAndGlyphs">Increments:</text>
<text x="3456.0" y="1002.4" font-size="19" fill="#000" stroke="#000" stroke-width="0.35" textLength="146.5" lengthAdjust="spacingAndGlyphs">RA: 9.68E0 mas</text>
<text x="3456.0" y="1032.0" font-size="19" fill="#000" stroke="#000" stroke-width="0.35" textLength="144.0" lengthAdjust="spacingAndGlyphs">DE: 9.68E0 mas</text>
<text x="3456.0" y="1088.3" font-size="19" fill="#000" stroke="#000" stroke-width="0.35" textLength="111.0" lengthAdjust="spacingAndGlyphs">Image FOV:</text>
<text x="3456.0" y="1117.9" font-size="19" fill="#000" stroke="#000" stroke-width="0.35" textLength="97.0" lengthAdjust="spacingAndGlyphs">0.6 arcsec</text>
<text x="3456.0" y="1174.2" font-size="19" fill="#000" stroke="#000" stroke-width="0.35" textLength="64.0" lengthAdjust="spacingAndGlyphs">Pixels:</text>
<text x="3456.0" y="1203.8" font-size="19" fill="#000" stroke="#000" stroke-width="0.35" textLength="70.0" lengthAdjust="spacingAndGlyphs">62 x 62</text>
<text x="175.8" y="1671.5" font-size="26" fill="#000" stroke="#000" stroke-width="0.35" textLength="118.4" lengthAdjust="spacingAndGlyphs">LUT table</text>
<rect x="306.4" y="1639" width="1628.1" height="42.5" fill="#86b5ee" rx="12"/>
<rect x="309" y="1641.5" width="1623" height="37.5" fill="#ffffff" rx="9.5"/>
<rect x="1897.3" y="1643.4" width="33.7" height="33.7" fill="url(#bg)" rx="6"/>
<path d="M1907.65 1656.75 L1914.15 1650.25 L1920.65 1656.75 M1907.65 1663.75 L1914.15 1670.25 L1920.65 1663.75" fill="none" stroke="#fff" stroke-width="3" stroke-linecap="round" stroke-linejoin="round"/>
<text x="332.0" y="1669.8" font-size="26" fill="#000" stroke="#000" stroke-width="0.35" textLength="63.6" lengthAdjust="spacingAndGlyphs">Earth</text>
<text x="1953.4" y="1671.3" font-size="26" fill="#000" stroke="#000" stroke-width="0.35" textLength="141.6" lengthAdjust="spacingAndGlyphs">Color scale</text>
<rect x="2108" y="1640.5" width="1035.8" height="40.0" fill="#c8c8c8" rx="9"/>
<rect x="2108" y="1640" width="1035.8" height="39.8" fill="#dadada" rx="9"/>
<rect x="2108.5" y="1640.5" width="1034.8" height="38.8" fill="#ffffff" rx="8.5"/>
<rect x="3108" y="1644" width="31.8" height="32.3" fill="url(#bg)" rx="6"/>
<path d="M3117.4 1656.65 L3123.9 1650.15 L3130.4 1656.65 M3117.4 1663.65 L3123.9 1670.15 L3130.4 1663.65" fill="none" stroke="#fff" stroke-width="3" stroke-linecap="round" stroke-linejoin="round"/>
<text x="2132.0" y="1669.8" font-size="26" fill="#000" stroke="#000" stroke-width="0.35" textLength="90.5" lengthAdjust="spacingAndGlyphs">LINEAR</text>
<rect x="3177.8" y="1642.3" width="282.2" height="41.2" fill="#c9c9c9" rx="9"/>
<rect x="3177.8" y="1641.8" width="282.2" height="40.7" fill="#d9d9d9" rx="9"/>
<rect x="3178.3" y="1642.3" width="281.2" height="39.7" fill="#ffffff" rx="8.5"/>
<text x="3208.0" y="1669.5" font-size="26" fill="#000" stroke="#000" stroke-width="0.35" textLength="220.6" lengthAdjust="spacingAndGlyphs">Display keywords</text>
<rect x="3496" y="1642.3" width="124" height="41.2" fill="#c9c9c9" rx="9"/>
<rect x="3496" y="1641.8" width="124" height="40.7" fill="#d9d9d9" rx="9"/>
<rect x="3496.5" y="1642.3" width="123.0" height="39.7" fill="#ffffff" rx="8.5"/>
<text x="3526.0" y="1669.5" font-size="26" fill="#000" stroke="#000" stroke-width="0.35" textLength="65.0" lengthAdjust="spacingAndGlyphs">Ruler</text>
<rect x="138.5" y="1730.5" width="1164.5" height="1" fill="#9c9c9c"/>
<rect x="139.5" y="1731.5" width="1163" height="1" fill="#ffffff"/>
<rect x="138.5" y="1730.5" width="1" height="81" fill="#9c9c9c"/>
<rect x="139.5" y="1731.5" width="1" height="79" fill="#ffffff"/>
<rect x="1302.5" y="1730.5" width="1" height="81" fill="#9c9c9c"/>
<rect x="1303.5" y="1730.5" width="1" height="82" fill="#ffffff"/>
<rect x="138.5" y="1811" width="1164.5" height="1" fill="#9c9c9c"/>
<rect x="138.5" y="1812" width="1166" height="1" fill="#ffffff"/>
<rect x="196" y="1752.3" width="158" height="40.7" fill="#c9c9c9" rx="9"/>
<rect x="196" y="1751.8" width="158" height="40.2" fill="#d9d9d9" rx="9"/>
<rect x="196.5" y="1752.3" width="157.0" height="39.2" fill="#ffffff" rx="8.5"/>
<text x="225.7" y="1778.0" font-size="22" fill="#000" stroke="#000" stroke-width="0.35" textLength="99.2" lengthAdjust="spacingAndGlyphs">Continue</text>
<rect x="422" y="1752.3" width="147.8" height="40.7" fill="#c9c9c9" rx="9"/>
<rect x="422" y="1751.8" width="147.8" height="40.2" fill="#d9d9d9" rx="9"/>
<rect x="422.5" y="1752.3" width="146.8" height="39.2" fill="#ffffff" rx="8.5"/>
<text x="452.5" y="1780.5" font-size="26" fill="#000" stroke="#000" stroke-width="0.35" textLength="87.5" lengthAdjust="spacingAndGlyphs">Restart</text>
<rect x="637.7" y="1752.3" width="295.9" height="40.7" fill="#c9c9c9" rx="9"/>
<rect x="637.7" y="1751.8" width="295.9" height="40.2" fill="#d9d9d9" rx="9"/>
<rect x="638.2" y="1752.3" width="294.9" height="39.2" fill="#ffffff" rx="8.5"/>
<text x="667.6" y="1780.5" font-size="26" fill="#000" stroke="#000" stroke-width="0.35" textLength="235.1" lengthAdjust="spacingAndGlyphs">Update parameters</text>
<rect x="1002" y="1752.3" width="246" height="40.7" fill="#c9c9c9" rx="9"/>
<rect x="1002" y="1751.8" width="246" height="40.2" fill="#d9d9d9" rx="9"/>
<rect x="1002.5" y="1752.3" width="245.0" height="39.2" fill="#ffffff" rx="8.5"/>
<text x="1031.0" y="1780.5" font-size="26" fill="#000" stroke="#000" stroke-width="0.35" textLength="187.8" lengthAdjust="spacingAndGlyphs">Save OIFits file</text>
<linearGradient id="sd" x1="0" y1="0" x2="0" y2="1"><stop offset="0" stop-color="#f4f4f4"/><stop offset="1" stop-color="#fbfbfb"/></linearGradient>
<rect x="136" y="1815.5" width="3538" height="18.3" fill="url(#sd)"/>
<circle cx="1904.8" cy="1824.6" r="6" fill="#dcdcdc"/>
<rect x="138" y="1834" width="3534" height="2" fill="#585858"/>
<rect x="138" y="1834" width="2" height="352" fill="#8a8a8a"/>
<rect x="3670" y="1834" width="1.6" height="352" fill="#8c8c8c"/>
<rect x="138" y="2184" width="3534" height="2" fill="#a0a0a0"/>
<rect x="185.6" y="1846.5" width="180.4" height="40.2" fill="#c9c9c9" rx="9"/>
<rect x="185.6" y="1846" width="180.4" height="39.7" fill="#d9d9d9" rx="9"/>
<rect x="186.1" y="1846.5" width="179.4" height="38.7" fill="#ffffff" rx="8.5"/>
<text x="200.8" y="1874.6" font-size="26" fill="#000" stroke="#000" stroke-width="0.35" textLength="152.2" lengthAdjust="spacingAndGlyphs">Table editor</text>
<rect x="185.6" y="1904.5" width="172.4" height="40.5" fill="#c9c9c9" rx="9"/>
<rect x="185.6" y="1904" width="172.4" height="40" fill="#d9d9d9" rx="9"/>
<rect x="186.1" y="1904.5" width="171.4" height="39.0" fill="#ffffff" rx="8.5"/>
<text x="215.8" y="1931.9" font-size="26" fill="#000" stroke="#000" stroke-width="0.35" textLength="112.7" lengthAdjust="spacingAndGlyphs">Compare</text>
<rect x="185.6" y="1962.5" width="140.4" height="40.5" fill="#c9c9c9" rx="9"/>
<rect x="185.6" y="1962" width="140.4" height="40" fill="#d9d9d9" rx="9"/>
<rect x="186.1" y="1962.5" width="139.4" height="39.0" fill="#ffffff" rx="8.5"/>
<text x="216.0" y="1990.0" font-size="26" fill="#000" stroke="#000" stroke-width="0.35" textLength="80.6" lengthAdjust="spacingAndGlyphs">Delete</text>
<rect x="185" y="2038.5" width="166" height="5.0" fill="#b4b4b4" rx="2.5"/>
<circle cx="171" cy="2042" r="15.5" fill="#c4c4c4"/>
<circle cx="171" cy="2041" r="15" fill="#ffffff" stroke="#d8d8d8" stroke-width="0.8"/>
<rect x="380" y="2001" width="18" height="19.6" fill="#f8f8f8"/>
<circle cx="388.8" cy="2011" r="5" fill="#d0d0d0"/>
<rect x="398.2" y="1838.2" width="3269.8" height="1.8" fill="#626262"/>
<rect x="398.2" y="1838.2" width="1.8" height="342.5" fill="#8a8a8a"/>
<rect x="3666" y="1838.2" width="2" height="342.5" fill="#7e7e7e"/>
<rect x="398.2" y="2179.5" width="3270" height="1.5" fill="#b8b8b8"/>
<rect x="400" y="1840" width="3266.5" height="339.5" fill="#ffffff"/>
<text x="408.9" y="1864.0" font-size="22" fill="#000" stroke="#000" stroke-width="0.35" textLength="58.8" lengthAdjust="spacingAndGlyphs">Index</text>
<text x="511.1" y="1864.0" font-size="22" fill="#000" stroke="#000" stroke-width="0.35" textLength="87.3" lengthAdjust="spacingAndGlyphs">TARGET</text>
<text x="743.9" y="1864.0" font-size="22" fill="#000" stroke="#000" stroke-width="0.35" textLength="117.0" lengthAdjust="spacingAndGlyphs">SOFTWARE</text>
<text x="899.6" y="1864.0" font-size="22" fill="#000" stroke="#000" stroke-width="0.35" textLength="94.2" lengthAdjust="spacingAndGlyphs">INIT_IMG</text>
<text x="1221.4" y="1864.0" font-size="22" fill="#000" stroke="#000" stroke-width="0.35" textLength="117.1" lengthAdjust="spacingAndGlyphs">RGL_NAME</text>
<text x="1411.0" y="1864.0" font-size="22" fill="#000" stroke="#000" stroke-width="0.35" textLength="103.1" lengthAdjust="spacingAndGlyphs">RGL_WGT</text>
<text x="1619.8" y="1864.0" font-size="22" fill="#000" stroke="#000" stroke-width="0.35" textLength="63.0" lengthAdjust="spacingAndGlyphs">NITER</text>
<text x="1723.6" y="1864.0" font-size="22" fill="#000" stroke="#000" stroke-width="0.35" textLength="68.4" lengthAdjust="spacingAndGlyphs">CHISQ</text>
<text x="1995.6" y="1864.0" font-size="22" fill="#000" stroke="#000" stroke-width="0.35" textLength="85.9" lengthAdjust="spacingAndGlyphs">Success</text>
<text x="2131.8" y="1864.0" font-size="22" fill="#000" stroke="#000" stroke-width="0.35" textLength="82.6" lengthAdjust="spacingAndGlyphs">RATING</text>
<text x="2331.0" y="1864.0" font-size="22" fill="#000" stroke="#000" stroke-width="0.35" textLength="116.0" lengthAdjust="spacingAndGlyphs">USERNOTE</text>
<text x="2485.6" y="1864.0" font-size="22" fill="#000" stroke="#000" stroke-width="0.35" textLength="45.6" lengthAdjust="spacingAndGlyphs">FOV</text>
<text x="2568.7" y="1864.0" font-size="22" fill="#000" stroke="#000" stroke-width="0.35" textLength="37.9" lengthAdjust="spacingAndGlyphs">File</text>
<rect x="504.05" y="1846" width="1.5" height="21.5" fill="#dedede"/>
<rect x="735.75" y="1846" width="1.5" height="21.5" fill="#dedede"/>
<rect x="892.25" y="1846" width="1.5" height="21.5" fill="#dedede"/>
<rect x="1214.25" y="1846" width="1.5" height="21.5" fill="#dedede"/>
<rect x="1403.95" y="1846" width="1.5" height="21.5" fill="#dedede"/>
<rect x="1611.75" y="1846" width="1.5" height="21.5" fill="#dedede"/>
<rect x="1716.25" y="1846" width="1.5" height="21.5" fill="#dedede"/>
<rect x="1988.25" y="1846" width="1.5" height="21.5" fill="#dedede"/>
<rect x="2124.55" y="1846" width="1.5" height="21.5" fill="#dedede"/>
<rect x="2324.75" y="1846" width="1.5" height="21.5" fill="#dedede"/>
<rect x="2478.25" y="1846" width="1.5" height="21.5" fill="#dedede"/>
<rect x="2562.55" y="1846" width="1.5" height="21.5" fill="#dedede"/>
<rect x="3191.85" y="1846" width="1.5" height="21.5" fill="#dedede"/>
<path d="M2221.5 1854 H2232.5" stroke="#6e6e6e" stroke-width="2" stroke-linecap="round"/>
<path d="M2222.5 1855.5 L2225.6 1866" stroke="#a8a8a8" stroke-width="2"/>
<clipPath id="tclip"><rect x="400" y="1840" width="3234" height="309.7"/></clipPath>
<g clip-path="url(#tclip)">
<text x="452.2" y="1897.7" font-size="25" fill="#000000" stroke="#000000" stroke-width="0.35" textLength="47.4" lengthAdjust="spacingAndGlyphs">106</text>
<text x="509.9" y="1897.7" font-size="25" fill="#000000" stroke="#000000" stroke-width="0.35" textLength="188.0" lengthAdjust="spacingAndGlyphs">Mysterious_Obj2</text>
<text x="740.3" y="1897.7" font-size="25" fill="#000000" stroke="#000000" stroke-width="0.35" textLength="91.7" lengthAdjust="spacingAndGlyphs">SPARCO</text>
<text x="896.4" y="1897.7" font-size="25" fill="#000000" stroke="#000000" stroke-width="0.35" textLength="280.0" lengthAdjust="spacingAndGlyphs">IMAGE–OI INITIAL IMAGE</text>
<text x="1219.0" y="1897.7" font-size="25" fill="#000000" stroke="#000000" stroke-width="0.35" textLength="117.4" lengthAdjust="spacingAndGlyphs">hyperbolic</text>
<text x="1409.3" y="1897.7" font-size="25" fill="#000000" stroke="#000000" stroke-width="0.35" textLength="102.3" lengthAdjust="spacingAndGlyphs">1.000E8</text>
<text x="1617.4" y="1897.7" font-size="25" fill="#000000" stroke="#000000" stroke-width="0.35" textLength="47.4" lengthAdjust="spacingAndGlyphs">101</text>
<text x="1720.4" y="1897.7" font-size="25" fill="#000000" stroke="#000000" stroke-width="0.35" textLength="213.4" lengthAdjust="spacingAndGlyphs">2658.720681755</text>
<text x="2567.3" y="1897.7" font-size="25" fill="#000000" stroke="#000000" stroke-width="0.35" textLength="587.0" lengthAdjust="spacingAndGlyphs">Mysterious_Obj2_2022-07-11T15:34:08_107.fits</text>
<rect x="1990" y="1874.2" width="133.8" height="29.7" fill="#ebebeb"/>
<clipPath id="sc0"><rect x="1990" y="1874.2" width="134" height="29.7"/></clipPath>
<g clip-path="url(#sc0)"><circle cx="2072" cy="1894.0" r="16" fill="#007f00"/><path d="M2066 1895.7 L2071 1900.7 L2079.5 1887.7" fill="none" stroke="#fff" stroke-width="3.6" stroke-linecap="round" stroke-linejoin="round" opacity="0.92"/></g>
<polygon points="2141.7,1875.2 2145.8,1885.0 2156.3,1885.8 2148.3,1892.7 2150.8,1903.1 2141.7,1897.5 2132.6,1903.1 2135.1,1892.7 2127.1,1885.8 2137.6,1885.0" fill="#e0a888" stroke="#c99080" stroke-width="1.2" stroke-linejoin="round"/>
<polygon points="2173.7,1875.2 2177.8,1885.0 2188.3,1885.8 2180.3,1892.7 2182.8,1903.1 2173.7,1897.5 2164.6,1903.1 2167.1,1892.7 2159.1,1885.8 2169.6,1885.0" fill="#e0a888" stroke="#c99080" stroke-width="1.2" stroke-linejoin="round"/>
<polygon points="2205.7,1875.2 2209.8,1885.0 2220.3,1885.8 2212.3,1892.7 2214.8,1903.1 2205.7,1897.5 2196.6,1903.1 2199.1,1892.7 2191.1,1885.8 2201.6,1885.0" fill="#e0a888" stroke="#c99080" stroke-width="1.2" stroke-linejoin="round"/>
<polygon points="2237.7,1875.2 2241.8,1885.0 2252.3,1885.8 2244.3,1892.7 2246.8,1903.1 2237.7,1897.5 2228.6,1903.1 2231.1,1892.7 2223.1,1885.8 2233.6,1885.0" fill="#e0a888" stroke="#c99080" stroke-width="1.2" stroke-linejoin="round"/>
<polygon points="2269.7,1875.2 2273.8,1885.0 2284.3,1885.8 2276.3,1892.7 2278.8,1903.1 2269.7,1897.5 2260.6,1903.1 2263.1,1892.7 2255.1,1885.8 2265.6,1885.0" fill="#dcdcdc" stroke="#b9b9b9" stroke-width="1.2" stroke-linejoin="round"/>
<text x="468.0" y="1929.7" font-size="25" fill="#000000" stroke="#000000" stroke-width="0.35" textLength="31.6" lengthAdjust="spacingAndGlyphs">90</text>
<text x="509.9" y="1929.7" font-size="25" fill="#000000" stroke="#000000" stroke-width="0.35" textLength="188.0" lengthAdjust="spacingAndGlyphs">Mysterious_Obj2</text>
<text x="740.3" y="1929.7" font-size="25" fill="#000000" stroke="#000000" stroke-width="0.35" textLength="91.7" lengthAdjust="spacingAndGlyphs">SPARCO</text>
<text x="896.4" y="1929.7" font-size="25" fill="#000000" stroke="#000000" stroke-width="0.35" textLength="280.0" lengthAdjust="spacingAndGlyphs">IMAGE–OI INITIAL IMAGE</text>
<text x="1219.0" y="1929.7" font-size="25" fill="#000000" stroke="#000000" stroke-width="0.35" textLength="117.4" lengthAdjust="spacingAndGlyphs">hyperbolic</text>
<text x="1409.3" y="1929.7" font-size="25" fill="#000000" stroke="#000000" stroke-width="0.35" textLength="102.3" lengthAdjust="spacingAndGlyphs">1.000E7</text>
<text x="1617.4" y="1929.7" font-size="25" fill="#000000" stroke="#000000" stroke-width="0.35" textLength="31.6" lengthAdjust="spacingAndGlyphs">64</text>
<text x="1720.4" y="1929.7" font-size="25" fill="#000000" stroke="#000000" stroke-width="0.35" textLength="213.4" lengthAdjust="spacingAndGlyphs">2757.674098069</text>
<text x="2567.3" y="1929.7" font-size="25" fill="#000000" stroke="#000000" stroke-width="0.35" textLength="570.8" lengthAdjust="spacingAndGlyphs">Mysterious_Obj2_2022-07-11T15:28:49_91.fits</text>
<rect x="1990" y="1906.2" width="133.8" height="29.7" fill="#ebebeb"/>
<clipPath id="sc1"><rect x="1990" y="1906.2" width="134" height="29.7"/></clipPath>
<g clip-path="url(#sc1)"><circle cx="2072" cy="1926.0" r="16" fill="#007f00"/><path d="M2066 1927.7 L2071 1932.7 L2079.5 1919.7" fill="none" stroke="#fff" stroke-width="3.6" stroke-linecap="round" stroke-linejoin="round" opacity="0.92"/></g>
<polygon points="2141.7,1907.2 2145.8,1917.0 2156.3,1917.8 2148.3,1924.7 2150.8,1935.1 2141.7,1929.5 2132.6,1935.1 2135.1,1924.7 2127.1,1917.8 2137.6,1917.0" fill="#e0a888" stroke="#c99080" stroke-width="1.2" stroke-linejoin="round"/>
<polygon points="2173.7,1907.2 2177.8,1917.0 2188.3,1917.8 2180.3,1924.7 2182.8,1935.1 2173.7,1929.5 2164.6,1935.1 2167.1,1924.7 2159.1,1917.8 2169.6,1917.0" fill="#e0a888" stroke="#c99080" stroke-width="1.2" stroke-linejoin="round"/>
<polygon points="2205.7,1907.2 2209.8,1917.0 2220.3,1917.8 2212.3,1924.7 2214.8,1935.1 2205.7,1929.5 2196.6,1935.1 2199.1,1924.7 2191.1,1917.8 2201.6,1917.0" fill="#e0a888" stroke="#c99080" stroke-width="1.2" stroke-linejoin="round"/>
<polygon points="2237.7,1907.2 2241.8,1917.0 2252.3,1917.8 2244.3,1924.7 2246.8,1935.1 2237.7,1929.5 2228.6,1935.1 2231.1,1924.7 2223.1,1917.8 2233.6,1917.0" fill="#e0a888" stroke="#c99080" stroke-width="1.2" stroke-linejoin="round"/>
<polygon points="2269.7,1907.2 2273.8,1917.0 2284.3,1917.8 2276.3,1924.7 2278.8,1935.1 2269.7,1929.5 2260.6,1935.1 2263.1,1924.7 2255.1,1917.8 2265.6,1917.0" fill="#dcdcdc" stroke="#b9b9b9" stroke-width="1.2" stroke-linejoin="round"/>
<text x="468.0" y="1961.7" font-size="25" fill="#000000" stroke="#000000" stroke-width="0.35" textLength="31.6" lengthAdjust="spacingAndGlyphs">72</text>
<text x="509.9" y="1961.7" font-size="25" fill="#000000" stroke="#000000" stroke-width="0.35" textLength="188.0" lengthAdjust="spacingAndGlyphs">Mysterious_Obj2</text>
<text x="740.3" y="1961.7" font-size="25" fill="#000000" stroke="#000000" stroke-width="0.35" textLength="58.0" lengthAdjust="spacingAndGlyphs">MIRA</text>
<text x="896.4" y="1961.7" font-size="25" fill="#000000" stroke="#000000" stroke-width="0.35" textLength="280.0" lengthAdjust="spacingAndGlyphs">IMAGE–OI INITIAL IMAGE</text>
<text x="1219.0" y="1961.7" font-size="25" fill="#000000" stroke="#000000" stroke-width="0.35" textLength="117.4" lengthAdjust="spacingAndGlyphs">hyperbolic</text>
<text x="1409.3" y="1961.7" font-size="25" fill="#000000" stroke="#000000" stroke-width="0.35" textLength="150.2" lengthAdjust="spacingAndGlyphs">100000.000</text>
<text x="1617.4" y="1961.7" font-size="25" fill="#000000" stroke="#000000" stroke-width="0.35" textLength="63.2" lengthAdjust="spacingAndGlyphs">1001</text>
<text x="1720.4" y="1961.7" font-size="25" fill="#000000" stroke="#000000" stroke-width="0.35" textLength="213.4" lengthAdjust="spacingAndGlyphs">160.1808294358</text>
<text x="2567.3" y="1961.7" font-size="25" fill="#000000" stroke="#000000" stroke-width="0.35" textLength="570.8" lengthAdjust="spacingAndGlyphs">Mysterious_Obj2_2022-07-11T15:11:07_71.fits</text>
<rect x="1990" y="1938.2" width="133.8" height="29.7" fill="#ebebeb"/>
<clipPath id="sc2"><rect x="1990" y="1938.2" width="134" height="29.7"/></clipPath>
<g clip-path="url(#sc2)"><circle cx="2072" cy="1958.0" r="16" fill="#007f00"/><path d="M2066 1959.7 L2071 1964.7 L2079.5 1951.7" fill="none" stroke="#fff" stroke-width="3.6" stroke-linecap="round" stroke-linejoin="round" opacity="0.92"/></g>
<polygon points="2141.7,1939.2 2145.8,1949.0 2156.3,1949.8 2148.3,1956.7 2150.8,1967.1 2141.7,1961.5 2132.6,1967.1 2135.1,1956.7 2127.1,1949.8 2137.6,1949.0" fill="#e0a888" stroke="#c99080" stroke-width="1.2" stroke-linejoin="round"/>
<polygon points="2173.7,1939.2 2177.8,1949.0 2188.3,1949.8 2180.3,1956.7 2182.8,1967.1 2173.7,1961.5 2164.6,1967.1 2167.1,1956.7 2159.1,1949.8 2169.6,1949.0" fill="#e0a888" stroke="#c99080" stroke-width="1.2" stroke-linejoin="round"/>
<polygon points="2205.7,1939.2 2209.8,1949.0 2220.3,1949.8 2212.3,1956.7 2214.8,1967.1 2205.7,1961.5 2196.6,1967.1 2199.1,1956.7 2191.1,1949.8 2201.6,1949.0" fill="#e0a888" stroke="#c99080" stroke-width="1.2" stroke-linejoin="round"/>
<polygon points="2237.7,1939.2 2241.8,1949.0 2252.3,1949.8 2244.3,1956.7 2246.8,1967.1 2237.7,1961.5 2228.6,1967.1 2231.1,1956.7 2223.1,1949.8 2233.6,1949.0" fill="#e0a888" stroke="#c99080" stroke-width="1.2" stroke-linejoin="round"/>
<polygon points="2269.7,1939.2 2273.8,1949.0 2284.3,1949.8 2276.3,1956.7 2278.8,1967.1 2269.7,1961.5 2260.6,1967.1 2263.1,1956.7 2255.1,1949.8 2265.6,1949.0" fill="#dcdcdc" stroke="#b9b9b9" stroke-width="1.2" stroke-linejoin="round"/>
<rect x="402" y="1970.0" width="101.8" height="29.8" fill="#0b4ad8"/>
<rect x="506" y="1970.0" width="229.7" height="29.8" fill="#0b4ad8"/>
<rect x="737.5" y="1970.0" width="154.5" height="29.8" fill="#0b4ad8"/>
<rect x="894" y="1970.0" width="320" height="29.8" fill="#0b4ad8"/>
<rect x="1216" y="1970.0" width="187.8" height="29.8" fill="#0b4ad8"/>
<rect x="1405.6" y="1970.0" width="206.0" height="29.8" fill="#0b4ad8"/>
<rect x="1613.4" y="1970.0" width="102.7" height="29.8" fill="#0b4ad8"/>
<rect x="1718" y="1970.0" width="269.8" height="29.8" fill="#0b4ad8"/>
<rect x="2326.5" y="1970.0" width="151.3" height="29.8" fill="#0b4ad8"/>
<rect x="2480" y="1970.0" width="82.3" height="29.8" fill="#0b4ad8"/>
<rect x="2564.3" y="1970.0" width="627.3" height="29.8" fill="#0b4ad8"/>
<text x="452.2" y="1993.7" font-size="25" fill="#ffffff" stroke="#ffffff" stroke-width="0.35" textLength="47.4" lengthAdjust="spacingAndGlyphs">161</text>
<text x="509.9" y="1993.7" font-size="25" fill="#ffffff" stroke="#ffffff" stroke-width="0.35" textLength="188.0" lengthAdjust="spacingAndGlyphs">Mysterious_Obj2</text>
<text x="740.3" y="1993.7" font-size="25" fill="#ffffff" stroke="#ffffff" stroke-width="0.35" textLength="91.7" lengthAdjust="spacingAndGlyphs">SPARCO</text>
<text x="896.4" y="1993.7" font-size="25" fill="#ffffff" stroke="#ffffff" stroke-width="0.35" textLength="280.0" lengthAdjust="spacingAndGlyphs">IMAGE–OI INITIAL IMAGE</text>
<text x="1219.0" y="1993.7" font-size="25" fill="#ffffff" stroke="#ffffff" stroke-width="0.35" textLength="117.4" lengthAdjust="spacingAndGlyphs">hyperbolic</text>
<text x="1409.3" y="1993.7" font-size="25" fill="#ffffff" stroke="#ffffff" stroke-width="0.35" textLength="134.4" lengthAdjust="spacingAndGlyphs">50000.000</text>
<text x="1617.4" y="1993.7" font-size="25" fill="#ffffff" stroke="#ffffff" stroke-width="0.35" textLength="47.4" lengthAdjust="spacingAndGlyphs">320</text>
<text x="1720.4" y="1993.7" font-size="25" fill="#ffffff" stroke="#ffffff" stroke-width="0.35" textLength="213.4" lengthAdjust="spacingAndGlyphs">2.446095702716</text>
<text x="2567.3" y="1993.7" font-size="25" fill="#ffffff" stroke="#ffffff" stroke-width="0.35" textLength="587.0" lengthAdjust="spacingAndGlyphs">Mysterious_Obj2_2022-07-11T16:12:53_162.fits</text>
<rect x="1990" y="1970.2" width="133.8" height="29.7" fill="#ebebeb"/>
<clipPath id="sc3"><rect x="1990" y="1970.2" width="134" height="29.7"/></clipPath>
<g clip-path="url(#sc3)"><circle cx="2072" cy="1990.0" r="16" fill="#007f00"/><path d="M2066 1991.7 L2071 1996.7 L2079.5 1983.7" fill="none" stroke="#fff" stroke-width="3.6" stroke-linecap="round" stroke-linejoin="round" opacity="0.92"/></g>
<polygon points="2141.7,1971.2 2145.8,1981.0 2156.3,1981.8 2148.3,1988.7 2150.8,1999.1 2141.7,1993.5 2132.6,1999.1 2135.1,1988.7 2127.1,1981.8 2137.6,1981.0" fill="#e0a888" stroke="#c99080" stroke-width="1.2" stroke-linejoin="round"/>
<polygon points="2173.7,1971.2 2177.8,1981.0 2188.3,1981.8 2180.3,1988.7 2182.8,1999.1 2173.7,1993.5 2164.6,1999.1 2167.1,1988.7 2159.1,1981.8 2169.6,1981.0" fill="#e0a888" stroke="#c99080" stroke-width="1.2" stroke-linejoin="round"/>
<polygon points="2205.7,1971.2 2209.8,1981.0 2220.3,1981.8 2212.3,1988.7 2214.8,1999.1 2205.7,1993.5 2196.6,1999.1 2199.1,1988.7 2191.1,1981.8 2201.6,1981.0" fill="#e0a888" stroke="#c99080" stroke-width="1.2" stroke-linejoin="round"/>
<polygon points="2237.7,1971.2 2241.8,1981.0 2252.3,1981.8 2244.3,1988.7 2246.8,1999.1 2237.7,1993.5 2228.6,1999.1 2231.1,1988.7 2223.1,1981.8 2233.6,1981.0" fill="#dcdcdc" stroke="#b9b9b9" stroke-width="1.2" stroke-linejoin="round"/>
<polygon points="2269.7,1971.2 2273.8,1981.0 2284.3,1981.8 2276.3,1988.7 2278.8,1999.1 2269.7,1993.5 2260.6,1999.1 2263.1,1988.7 2255.1,1981.8 2265.6,1981.0" fill="#dcdcdc" stroke="#b9b9b9" stroke-width="1.2" stroke-linejoin="round"/>
<text x="452.2" y="2025.7" font-size="25" fill="#000000" stroke="#000000" stroke-width="0.35" textLength="47.4" lengthAdjust="spacingAndGlyphs">127</text>
<text x="509.9" y="2025.7" font-size="25" fill="#000000" stroke="#000000" stroke-width="0.35" textLength="188.0" lengthAdjust="spacingAndGlyphs">Mysterious_Obj2</text>
<text x="740.3" y="2025.7" font-size="25" fill="#000000" stroke="#000000" stroke-width="0.35" textLength="91.7" lengthAdjust="spacingAndGlyphs">SPARCO</text>
<text x="896.4" y="2025.7" font-size="25" fill="#000000" stroke="#000000" stroke-width="0.35" textLength="280.0" lengthAdjust="spacingAndGlyphs">IMAGE–OI INITIAL IMAGE</text>
<text x="1219.0" y="2025.7" font-size="25" fill="#000000" stroke="#000000" stroke-width="0.35" textLength="117.4" lengthAdjust="spacingAndGlyphs">hyperbolic</text>
<text x="1409.3" y="2025.7" font-size="25" fill="#000000" stroke="#000000" stroke-width="0.35" textLength="118.6" lengthAdjust="spacingAndGlyphs">1000.000</text>
<text x="1617.4" y="2025.7" font-size="25" fill="#000000" stroke="#000000" stroke-width="0.35" textLength="63.2" lengthAdjust="spacingAndGlyphs">1001</text>
<text x="1720.4" y="2025.7" font-size="25" fill="#000000" stroke="#000000" stroke-width="0.35" textLength="245.0" lengthAdjust="spacingAndGlyphs">0.07498987049709</text>
<text x="2567.3" y="2025.7" font-size="25" fill="#000000" stroke="#000000" stroke-width="0.35" textLength="587.0" lengthAdjust="spacingAndGlyphs">Mysterious_Obj2_2022-07-11T15:41:41_128.fits</text>
<rect x="1990" y="2002.2" width="133.8" height="29.7" fill="#ebebeb"/>
<clipPath id="sc4"><rect x="1990" y="2002.2" width="134" height="29.7"/></clipPath>
<g clip-path="url(#sc4)"><circle cx="2072" cy="2022.0" r="16" fill="#007f00"/><path d="M2066 2023.7 L2071 2028.7 L2079.5 2015.7" fill="none" stroke="#fff" stroke-width="3.6" stroke-linecap="round" stroke-linejoin="round" opacity="0.92"/></g>
<polygon points="2141.7,2003.2 2145.8,2013.0 2156.3,2013.8 2148.3,2020.7 2150.8,2031.1 2141.7,2025.5 2132.6,2031.1 2135.1,2020.7 2127.1,2013.8 2137.6,2013.0" fill="#e0a888" stroke="#c99080" stroke-width="1.2" stroke-linejoin="round"/>
<polygon points="2173.7,2003.2 2177.8,2013.0 2188.3,2013.8 2180.3,2020.7 2182.8,2031.1 2173.7,2025.5 2164.6,2031.1 2167.1,2020.7 2159.1,2013.8 2169.6,2013.0" fill="#e0a888" stroke="#c99080" stroke-width="1.2" stroke-linejoin="round"/>
<polygon points="2205.7,2003.2 2209.8,2013.0 2220.3,2013.8 2212.3,2020.7 2214.8,2031.1 2205.7,2025.5 2196.6,2031.1 2199.1,2020.7 2191.1,2013.8 2201.6,2013.0" fill="#e0a888" stroke="#c99080" stroke-width="1.2" stroke-linejoin="round"/>
<polygon points="2237.7,2003.2 2241.8,2013.0 2252.3,2013.8 2244.3,2020.7 2246.8,2031.1 2237.7,2025.5 2228.6,2031.1 2231.1,2020.7 2223.1,2013.8 2233.6,2013.0" fill="#dcdcdc" stroke="#b9b9b9" stroke-width="1.2" stroke-linejoin="round"/>
<polygon points="2269.7,2003.2 2273.8,2013.0 2284.3,2013.8 2276.3,2020.7 2278.8,2031.1 2269.7,2025.5 2260.6,2031.1 2263.1,2020.7 2255.1,2013.8 2265.6,2013.0" fill="#dcdcdc" stroke="#b9b9b9" stroke-width="1.2" stroke-linejoin="round"/>
<text x="468.0" y="2057.7" font-size="25" fill="#000000" stroke="#000000" stroke-width="0.35" textLength="31.6" lengthAdjust="spacingAndGlyphs">91</text>
<text x="509.9" y="2057.7" font-size="25" fill="#000000" stroke="#000000" stroke-width="0.35" textLength="188.0" lengthAdjust="spacingAndGlyphs">Mysterious_Obj2</text>
<text x="740.3" y="2057.7" font-size="25" fill="#000000" stroke="#000000" stroke-width="0.35" textLength="91.7" lengthAdjust="spacingAndGlyphs">SPARCO</text>
<text x="896.4" y="2057.7" font-size="25" fill="#000000" stroke="#000000" stroke-width="0.35" textLength="280.0" lengthAdjust="spacingAndGlyphs">IMAGE–OI INITIAL IMAGE</text>
<text x="1219.0" y="2057.7" font-size="25" fill="#000000" stroke="#000000" stroke-width="0.35" textLength="117.4" lengthAdjust="spacingAndGlyphs">hyperbolic</text>
<text x="1409.3" y="2057.7" font-size="25" fill="#000000" stroke="#000000" stroke-width="0.35" textLength="102.3" lengthAdjust="spacingAndGlyphs">1.000E7</text>
<text x="1617.4" y="2057.7" font-size="25" fill="#000000" stroke="#000000" stroke-width="0.35" textLength="31.6" lengthAdjust="spacingAndGlyphs">83</text>
<text x="1720.4" y="2057.7" font-size="25" fill="#000000" stroke="#000000" stroke-width="0.35" textLength="213.4" lengthAdjust="spacingAndGlyphs">5155.831936826</text>
<text x="2567.3" y="2057.7" font-size="25" fill="#000000" stroke="#000000" stroke-width="0.35" textLength="570.8" lengthAdjust="spacingAndGlyphs">Mysterious_Obj2_2022-07-11T15:29:08_92.fits</text>
<rect x="1990" y="2034.2" width="133.8" height="29.7" fill="#ebebeb"/>
<clipPath id="sc5"><rect x="1990" y="2034.2" width="134" height="29.7"/></clipPath>
<g clip-path="url(#sc5)"><circle cx="2072" cy="2054.0" r="16" fill="#007f00"/><path d="M2066 2055.7 L2071 2060.7 L2079.5 2047.7" fill="none" stroke="#fff" stroke-width="3.6" stroke-linecap="round" stroke-linejoin="round" opacity="0.92"/></g>
<polygon points="2141.7,2035.2 2145.8,2045.0 2156.3,2045.8 2148.3,2052.7 2150.8,2063.1 2141.7,2057.5 2132.6,2063.1 2135.1,2052.7 2127.1,2045.8 2137.6,2045.0" fill="#e0a888" stroke="#c99080" stroke-width="1.2" stroke-linejoin="round"/>
<polygon points="2173.7,2035.2 2177.8,2045.0 2188.3,2045.8 2180.3,2052.7 2182.8,2063.1 2173.7,2057.5 2164.6,2063.1 2167.1,2052.7 2159.1,2045.8 2169.6,2045.0" fill="#e0a888" stroke="#c99080" stroke-width="1.2" stroke-linejoin="round"/>
<polygon points="2205.7,2035.2 2209.8,2045.0 2220.3,2045.8 2212.3,2052.7 2214.8,2063.1 2205.7,2057.5 2196.6,2063.1 2199.1,2052.7 2191.1,2045.8 2201.6,2045.0" fill="#e0a888" stroke="#c99080" stroke-width="1.2" stroke-linejoin="round"/>
<polygon points="2237.7,2035.2 2241.8,2045.0 2252.3,2045.8 2244.3,2052.7 2246.8,2063.1 2237.7,2057.5 2228.6,2063.1 2231.1,2052.7 2223.1,2045.8 2233.6,2045.0" fill="#dcdcdc" stroke="#b9b9b9" stroke-width="1.2" stroke-linejoin="round"/>
<polygon points="2269.7,2035.2 2273.8,2045.0 2284.3,2045.8 2276.3,2052.7 2278.8,2063.1 2269.7,2057.5 2260.6,2063.1 2263.1,2052.7 2255.1,2045.8 2265.6,2045.0" fill="#dcdcdc" stroke="#b9b9b9" stroke-width="1.2" stroke-linejoin="round"/>
<text x="452.2" y="2089.7" font-size="25" fill="#000000" stroke="#000000" stroke-width="0.35" textLength="47.4" lengthAdjust="spacingAndGlyphs">141</text>
<text x="509.9" y="2089.7" font-size="25" fill="#000000" stroke="#000000" stroke-width="0.35" textLength="188.0" lengthAdjust="spacingAndGlyphs">Mysterious_Obj2</text>
<text x="740.3" y="2089.7" font-size="25" fill="#000000" stroke="#000000" stroke-width="0.35" textLength="91.7" lengthAdjust="spacingAndGlyphs">SPARCO</text>
<text x="896.4" y="2089.7" font-size="25" fill="#000000" stroke="#000000" stroke-width="0.35" textLength="280.0" lengthAdjust="spacingAndGlyphs">IMAGE–OI INITIAL IMAGE</text>
<text x="1219.0" y="2089.7" font-size="25" fill="#000000" stroke="#000000" stroke-width="0.35" textLength="117.4" lengthAdjust="spacingAndGlyphs">hyperbolic</text>
<text x="1409.3" y="2089.7" font-size="25" fill="#000000" stroke="#000000" stroke-width="0.35" textLength="134.4" lengthAdjust="spacingAndGlyphs">10000.000</text>
<text x="1617.4" y="2089.7" font-size="25" fill="#000000" stroke="#000000" stroke-width="0.35" textLength="47.4" lengthAdjust="spacingAndGlyphs">526</text>
<text x="1720.4" y="2089.7" font-size="25" fill="#000000" stroke="#000000" stroke-width="0.35" textLength="213.4" lengthAdjust="spacingAndGlyphs">1.070683486592</text>
<text x="2567.3" y="2089.7" font-size="25" fill="#000000" stroke="#000000" stroke-width="0.35" textLength="587.0" lengthAdjust="spacingAndGlyphs">Mysterious_Obj2_2022-07-11T16:06:47_142.fits</text>
<rect x="1990" y="2066.2" width="133.8" height="29.7" fill="#ebebeb"/>
<clipPath id="sc6"><rect x="1990" y="2066.2" width="134" height="29.7"/></clipPath>
<g clip-path="url(#sc6)"><circle cx="2072" cy="2086.0" r="16" fill="#007f00"/><path d="M2066 2087.7 L2071 2092.7 L2079.5 2079.7" fill="none" stroke="#fff" stroke-width="3.6" stroke-linecap="round" stroke-linejoin="round" opacity="0.92"/></g>
<polygon points="2141.7,2067.2 2145.8,2077.0 2156.3,2077.8 2148.3,2084.7 2150.8,2095.1 2141.7,2089.5 2132.6,2095.1 2135.1,2084.7 2127.1,2077.8 2137.6,2077.0" fill="#e0a888" stroke="#c99080" stroke-width="1.2" stroke-linejoin="round"/>
<polygon points="2173.7,2067.2 2177.8,2077.0 2188.3,2077.8 2180.3,2084.7 2182.8,2095.1 2173.7,2089.5 2164.6,2095.1 2167.1,2084.7 2159.1,2077.8 2169.6,2077.0" fill="#e0a888" stroke="#c99080" stroke-width="1.2" stroke-linejoin="round"/>
<polygon points="2205.7,2067.2 2209.8,2077.0 2220.3,2077.8 2212.3,2084.7 2214.8,2095.1 2205.7,2089.5 2196.6,2095.1 2199.1,2084.7 2191.1,2077.8 2201.6,2077.0" fill="#dcdcdc" stroke="#b9b9b9" stroke-width="1.2" stroke-linejoin="round"/>
<polygon points="2237.7,2067.2 2241.8,2077.0 2252.3,2077.8 2244.3,2084.7 2246.8,2095.1 2237.7,2089.5 2228.6,2095.1 2231.1,2084.7 2223.1,2077.8 2233.6,2077.0" fill="#dcdcdc" stroke="#b9b9b9" stroke-width="1.2" stroke-linejoin="round"/>
<polygon points="2269.7,2067.2 2273.8,2077.0 2284.3,2077.8 2276.3,2084.7 2278.8,2095.1 2269.7,2089.5 2260.6,2095.1 2263.1,2084.7 2255.1,2077.8 2265.6,2077.0" fill="#dcdcdc" stroke="#b9b9b9" stroke-width="1.2" stroke-linejoin="round"/>
<text x="452.2" y="2121.7" font-size="25" fill="#000000" stroke="#000000" stroke-width="0.35" textLength="47.4" lengthAdjust="spacingAndGlyphs">115</text>
<text x="509.9" y="2121.7" font-size="25" fill="#000000" stroke="#000000" stroke-width="0.35" textLength="188.0" lengthAdjust="spacingAndGlyphs">Mysterious_Obj2</text>
<text x="740.3" y="2121.7" font-size="25" fill="#000000" stroke="#000000" stroke-width="0.35" textLength="91.7" lengthAdjust="spacingAndGlyphs">SPARCO</text>
<text x="896.4" y="2121.7" font-size="25" fill="#000000" stroke="#000000" stroke-width="0.35" textLength="280.0" lengthAdjust="spacingAndGlyphs">IMAGE–OI INITIAL IMAGE</text>
<text x="1219.0" y="2121.7" font-size="25" fill="#000000" stroke="#000000" stroke-width="0.35" textLength="117.4" lengthAdjust="spacingAndGlyphs">hyperbolic</text>
<text x="1409.3" y="2121.7" font-size="25" fill="#000000" stroke="#000000" stroke-width="0.35" textLength="150.2" lengthAdjust="spacingAndGlyphs">100000.000</text>
<text x="1617.4" y="2121.7" font-size="25" fill="#000000" stroke="#000000" stroke-width="0.35" textLength="47.4" lengthAdjust="spacingAndGlyphs">101</text>
<text x="1720.4" y="2121.7" font-size="25" fill="#000000" stroke="#000000" stroke-width="0.35" textLength="213.4" lengthAdjust="spacingAndGlyphs">177.0285935049</text>
<text x="2567.3" y="2121.7" font-size="25" fill="#000000" stroke="#000000" stroke-width="0.35" textLength="587.0" lengthAdjust="spacingAndGlyphs">Mysterious_Obj2_2022-07-11T15:38:58_116.fits</text>
<rect x="1990" y="2098.2" width="133.8" height="29.7" fill="#ebebeb"/>
<clipPath id="sc7"><rect x="1990" y="2098.2" width="134" height="29.7"/></clipPath>
<g clip-path="url(#sc7)"><circle cx="2072" cy="2118.0" r="16" fill="#007f00"/><path d="M2066 2119.7 L2071 2124.7 L2079.5 2111.7" fill="none" stroke="#fff" stroke-width="3.6" stroke-linecap="round" stroke-linejoin="round" opacity="0.92"/></g>
<polygon points="2141.7,2099.2 2145.8,2109.0 2156.3,2109.8 2148.3,2116.7 2150.8,2127.1 2141.7,2121.5 2132.6,2127.1 2135.1,2116.7 2127.1,2109.8 2137.6,2109.0" fill="#e0a888" stroke="#c99080" stroke-width="1.2" stroke-linejoin="round"/>
<polygon points="2173.7,2099.2 2177.8,2109.0 2188.3,2109.8 2180.3,2116.7 2182.8,2127.1 2173.7,2121.5 2164.6,2127.1 2167.1,2116.7 2159.1,2109.8 2169.6,2109.0" fill="#e0a888" stroke="#c99080" stroke-width="1.2" stroke-linejoin="round"/>
<polygon points="2205.7,2099.2 2209.8,2109.0 2220.3,2109.8 2212.3,2116.7 2214.8,2127.1 2205.7,2121.5 2196.6,2127.1 2199.1,2116.7 2191.1,2109.8 2201.6,2109.0" fill="#dcdcdc" stroke="#b9b9b9" stroke-width="1.2" stroke-linejoin="round"/>
<polygon points="2237.7,2099.2 2241.8,2109.0 2252.3,2109.8 2244.3,2116.7 2246.8,2127.1 2237.7,2121.5 2228.6,2127.1 2231.1,2116.7 2223.1,2109.8 2233.6,2109.0" fill="#dcdcdc" stroke="#b9b9b9" stroke-width="1.2" stroke-linejoin="round"/>
<polygon points="2269.7,2099.2 2273.8,2109.0 2284.3,2109.8 2276.3,2116.7 2278.8,2127.1 2269.7,2121.5 2260.6,2127.1 2263.1,2116.7 2255.1,2109.8 2265.6,2109.0" fill="#dcdcdc" stroke="#b9b9b9" stroke-width="1.2" stroke-linejoin="round"/>
<text x="483.8" y="2153.7" font-size="25" fill="#000000" stroke="#000000" stroke-width="0.35" textLength="15.8" lengthAdjust="spacingAndGlyphs">7</text>
<text x="509.9" y="2153.7" font-size="25" fill="#000000" stroke="#000000" stroke-width="0.35" textLength="188.0" lengthAdjust="spacingAndGlyphs">Mysterious_Obj2</text>
<text x="740.3" y="2153.7" font-size="25" fill="#000000" stroke="#000000" stroke-width="0.35" textLength="58.0" lengthAdjust="spacingAndGlyphs">MIRA</text>
<text x="896.4" y="2153.7" font-size="25" fill="#000000" stroke="#000000" stroke-width="0.35" textLength="280.0" lengthAdjust="spacingAndGlyphs">IMAGE–OI INITIAL IMAGE</text>
<text x="1219.0" y="2153.7" font-size="25" fill="#000000" stroke="#000000" stroke-width="0.35" textLength="151.7" lengthAdjust="spacingAndGlyphs">compactness</text>
<text x="1409.3" y="2153.7" font-size="25" fill="#000000" stroke="#000000" stroke-width="0.35" textLength="71.1" lengthAdjust="spacingAndGlyphs">1.000</text>
<text x="1617.4" y="2153.7" font-size="25" fill="#000000" stroke="#000000" stroke-width="0.35" textLength="31.6" lengthAdjust="spacingAndGlyphs">51</text>
<text x="1720.4" y="2153.7" font-size="25" fill="#000000" stroke="#000000" stroke-width="0.35" textLength="213.4" lengthAdjust="spacingAndGlyphs">320428.5224394</text>
<text x="2567.3" y="2153.7" font-size="25" fill="#000000" stroke="#000000" stroke-width="0.35" textLength="554.5" lengthAdjust="spacingAndGlyphs">Mysterious_Obj2_2022-07-11T14:41:00_6.fits</text>
<rect x="1990" y="2130.2" width="133.8" height="29.7" fill="#ebebeb"/>
<clipPath id="sc8"><rect x="1990" y="2130.2" width="134" height="29.7"/></clipPath>
<g clip-path="url(#sc8)"><circle cx="2072" cy="2150.0" r="16" fill="#007f00"/><path d="M2066 2151.7 L2071 2156.7 L2079.5 2143.7" fill="none" stroke="#fff" stroke-width="3.6" stroke-linecap="round" stroke-linejoin="round" opacity="0.92"/></g>
<polygon points="2141.7,2131.2 2145.8,2141.0 2156.3,2141.8 2148.3,2148.7 2150.8,2159.1 2141.7,2153.5 2132.6,2159.1 2135.1,2148.7 2127.1,2141.8 2137.6,2141.0" fill="#e0a888" stroke="#c99080" stroke-width="1.2" stroke-linejoin="round"/>
<polygon points="2173.7,2131.2 2177.8,2141.0 2188.3,2141.8 2180.3,2148.7 2182.8,2159.1 2173.7,2153.5 2164.6,2159.1 2167.1,2148.7 2159.1,2141.8 2169.6,2141.0" fill="#dcdcdc" stroke="#b9b9b9" stroke-width="1.2" stroke-linejoin="round"/>
<polygon points="2205.7,2131.2 2209.8,2141.0 2220.3,2141.8 2212.3,2148.7 2214.8,2159.1 2205.7,2153.5 2196.6,2159.1 2199.1,2148.7 2191.1,2141.8 2201.6,2141.0" fill="#dcdcdc" stroke="#b9b9b9" stroke-width="1.2" stroke-linejoin="round"/>
<polygon points="2237.7,2131.2 2241.8,2141.0 2252.3,2141.8 2244.3,2148.7 2246.8,2159.1 2237.7,2153.5 2228.6,2159.1 2231.1,2148.7 2223.1,2141.8 2233.6,2141.0" fill="#dcdcdc" stroke="#b9b9b9" stroke-width="1.2" stroke-linejoin="round"/>
<polygon points="2269.7,2131.2 2273.8,2141.0 2284.3,2141.8 2276.3,2148.7 2278.8,2159.1 2269.7,2153.5 2260.6,2159.1 2263.1,2148.7 2255.1,2141.8 2265.6,2141.0" fill="#dcdcdc" stroke="#b9b9b9" stroke-width="1.2" stroke-linejoin="round"/>
</g>
<rect x="400" y="2149.7" width="3234.5" height="30" fill="#f7f7f7"/>
<rect x="400" y="2149.7" width="3234.5" height="1" fill="#e4e4e4"/>
<rect x="3634" y="1874" width="30" height="275.7" fill="#f8f8f8"/>
<rect x="3634" y="1874" width="1.2" height="306" fill="#e2e2e2"/>
<rect x="3662.8" y="1874" width="1" height="306" fill="#ececec"/>
<rect x="3642.5" y="1875.8" width="14.5" height="36.2" fill="#c2c2c2" rx="7"/>
<rect x="3635" y="2150.7" width="28" height="28.3" fill="#ececec" stroke="#a6a6a6" stroke-width="2"/>
<rect x="126" y="2226" width="24" height="2" fill="#6b7682"/>
<rect x="124" y="2228" width="2" height="2" fill="#6b7682"/>
<rect x="126" y="2228" width="2" height="2" fill="#ffffff"/>
<rect x="128" y="2228" width="2" height="2" fill="#7b8692"/>
<rect x="130" y="2228" width="20" height="2" fill="#ffffff"/>
<rect x="150" y="2228" width="2" height="2" fill="#6b7682"/>
<rect x="124" y="2230" width="2" height="2" fill="#6b7682"/>
<rect x="126" y="2230" width="4" height="2" fill="#ffffff"/>
<rect x="130" y="2230" width="2" height="2" fill="#3f4955"/>
<rect x="132" y="2230" width="18" height="2" fill="#ffffff"/>
<rect x="150" y="2230" width="2" height="2" fill="#6b7682"/>
<rect x="124" y="2232" width="2" height="2" fill="#6b7682"/>
<rect x="126" y="2232" width="4" height="2" fill="#ffffff"/>
<rect x="130" y="2232" width="22" height="2" fill="#3f4955"/>
<rect x="124" y="2234" width="2" height="2" fill="#6b7682"/>
<rect x="126" y="2234" width="20" height="2" fill="#fbfcfe"/>
<rect x="146" y="2234" width="2" height="2" fill="#6b7682"/>
<rect x="124" y="2236" width="2" height="2" fill="#6b7682"/>
<rect x="126" y="2236" width="4" height="2" fill="#fbfcfe"/>
<rect x="130" y="2236" width="10" height="2" fill="#b9c4d0"/>
<rect x="140" y="2236" width="6" height="2" fill="#fbfcfe"/>
<rect x="146" y="2236" width="2" height="2" fill="#6b7682"/>
<rect x="124" y="2238" width="2" height="2" fill="#6b7682"/>
<rect x="126" y="2238" width="20" height="2" fill="#fbfcfe"/>
<rect x="146" y="2238" width="2" height="2" fill="#6b7682"/>
<rect x="124" y="2240" width="2" height="2" fill="#6b7682"/>
<rect x="126" y="2240" width="4" height="2" fill="#fbfcfe"/>
<rect x="130" y="2240" width="8" height="2" fill="#b9c4d0"/>
<rect x="138" y="2240" width="2" height="2" fill="#fbfcfe"/>
<rect x="140" y="2240" width="4" height="2" fill="#005a00"/>
<rect x="144" y="2240" width="2" height="2" fill="#fbfcfe"/>
<rect x="146" y="2240" width="2" height="2" fill="#c8ccd0"/>
<rect x="124" y="2242" width="2" height="2" fill="#6b7682"/>
<rect x="126" y="2242" width="14" height="2" fill="#f8fafd"/>
<rect x="140" y="2242" width="2" height="2" fill="#005a00"/>
<rect x="142" y="2242" width="2" height="2" fill="#ffff00"/>
<rect x="144" y="2242" width="2" height="2" fill="#004400"/>
<rect x="124" y="2244" width="2" height="2" fill="#6b7682"/>
<rect x="126" y="2244" width="4" height="2" fill="#f5f8fc"/>
<rect x="130" y="2244" width="8" height="2" fill="#b2bdca"/>
<rect x="138" y="2244" width="2" height="2" fill="#f5f8fc"/>
<rect x="140" y="2244" width="2" height="2" fill="#005a00"/>
<rect x="142" y="2244" width="2" height="2" fill="#90f080"/>
<rect x="144" y="2244" width="2" height="2" fill="#ffff00"/>
<rect x="146" y="2244" width="2" height="2" fill="#004400"/>
<rect x="124" y="2246" width="2" height="2" fill="#6b7682"/>
<rect x="126" y="2246" width="14" height="2" fill="#f2f6fb"/>
<rect x="140" y="2246" width="2" height="2" fill="#005a00"/>
<rect x="142" y="2246" width="4" height="2" fill="#16a016"/>
<rect x="146" y="2246" width="2" height="2" fill="#ffff00"/>
<rect x="148" y="2246" width="2" height="2" fill="#004400"/>
<rect x="124" y="2248" width="2" height="2" fill="#6b7682"/>
<rect x="126" y="2248" width="4" height="2" fill="#f0f4fa"/>
<rect x="130" y="2248" width="8" height="2" fill="#aab6c4"/>
<rect x="138" y="2248" width="2" height="2" fill="#f0f4fa"/>
<rect x="140" y="2248" width="2" height="2" fill="#005a00"/>
<rect x="142" y="2248" width="6" height="2" fill="#22b022"/>
<rect x="148" y="2248" width="2" height="2" fill="#ffff00"/>
<rect x="150" y="2248" width="2" height="2" fill="#004400"/>
<rect x="120" y="2250" width="4" height="2" fill="#56606c"/>
<rect x="124" y="2250" width="2" height="2" fill="#6b7682"/>
<rect x="126" y="2250" width="14" height="2" fill="#eef2f8"/>
<rect x="140" y="2250" width="2" height="2" fill="#005a00"/>
<rect x="142" y="2250" width="6" height="2" fill="#2cb82c"/>
<rect x="148" y="2250" width="2" height="2" fill="#004400"/>
<rect x="120" y="2252" width="2" height="2" fill="#56606c"/>
<rect x="122" y="2252" width="2" height="2" fill="#ffffff"/>
<rect x="124" y="2252" width="2" height="2" fill="#6b7682"/>
<rect x="126" y="2252" width="2" height="2" fill="#ffffff"/>
<rect x="128" y="2252" width="10" height="2" fill="#e4eaf2"/>
<rect x="138" y="2252" width="2" height="2" fill="#ffffff"/>
<rect x="140" y="2252" width="2" height="2" fill="#005a00"/>
<rect x="142" y="2252" width="4" height="2" fill="#44cc44"/>
<rect x="146" y="2252" width="2" height="2" fill="#004400"/>
<rect x="120" y="2254" width="4" height="2" fill="#56606c"/>
<rect x="124" y="2254" width="16" height="2" fill="#ffffff"/>
<rect x="140" y="2254" width="2" height="2" fill="#005a00"/>
<rect x="142" y="2254" width="2" height="2" fill="#70f060"/>
<rect x="144" y="2254" width="2" height="2" fill="#004400"/>
<rect x="122" y="2256" width="16" height="2" fill="#0c1620"/>
<rect x="140" y="2256" width="4" height="2" fill="#005a00"/>
<text x="167.5" y="2252.2" font-size="26" fill="#000" stroke="#000" stroke-width="0.35" textLength="257.0" lengthAdjust="spacingAndGlyphs">Spawn MIRA process</text>
<rect x="3122" y="2236.3" width="291.6" height="11.4" fill="#e2e2e2" rx="5.7"/>
<rect x="3122" y="2236.3" width="110" height="11.4" fill="#1b7cf4" rx="5.7"/>
<text x="3223.9" y="2249.0" font-size="26" fill="#000" stroke="#000" stroke-width="0.35" textLength="92.1" lengthAdjust="spacingAndGlyphs">1298 M</text>
<text x="3423.0" y="2247.7" font-size="20" font-style="italic" fill="#000" stroke="#000" stroke-width="0.35" textLength="112.0" lengthAdjust="spacingAndGlyphs">Provided by</text>
<linearGradient id="jms" gradientUnits="userSpaceOnUse" x1="3540" y1="2224" x2="3545" y2="2228" spreadMethod="repeat"><stop offset="0" stop-color="#8c0600"/><stop offset="0.3" stop-color="#d83a08"/><stop offset="0.55" stop-color="#ffb050"/><stop offset="0.75" stop-color="#e85010"/><stop offset="1" stop-color="#8c0600"/></linearGradient>
<g fill="none" stroke="url(#jms)" stroke-width="5.2" stroke-linecap="round" stroke-linejoin="round"><path d="M3561 2226.5 L3552.5 2250 Q3549.5 2256 3544.5 2250.5"/><path d="M3566.5 2254 L3574 2226.5 L3578.5 2253 L3595.5 2226.5 L3592 2254"/><path d="M3601 2254 L3609.5 2226.5 L3614 2253 L3631 2226.5 L3627.5 2254"/><path d="M3664 2232 Q3656 2224 3647 2228 Q3637 2234 3638 2246 Q3641 2256 3651 2255 Q3659 2254 3662 2249"/></g>
</svg>
</body></html>
